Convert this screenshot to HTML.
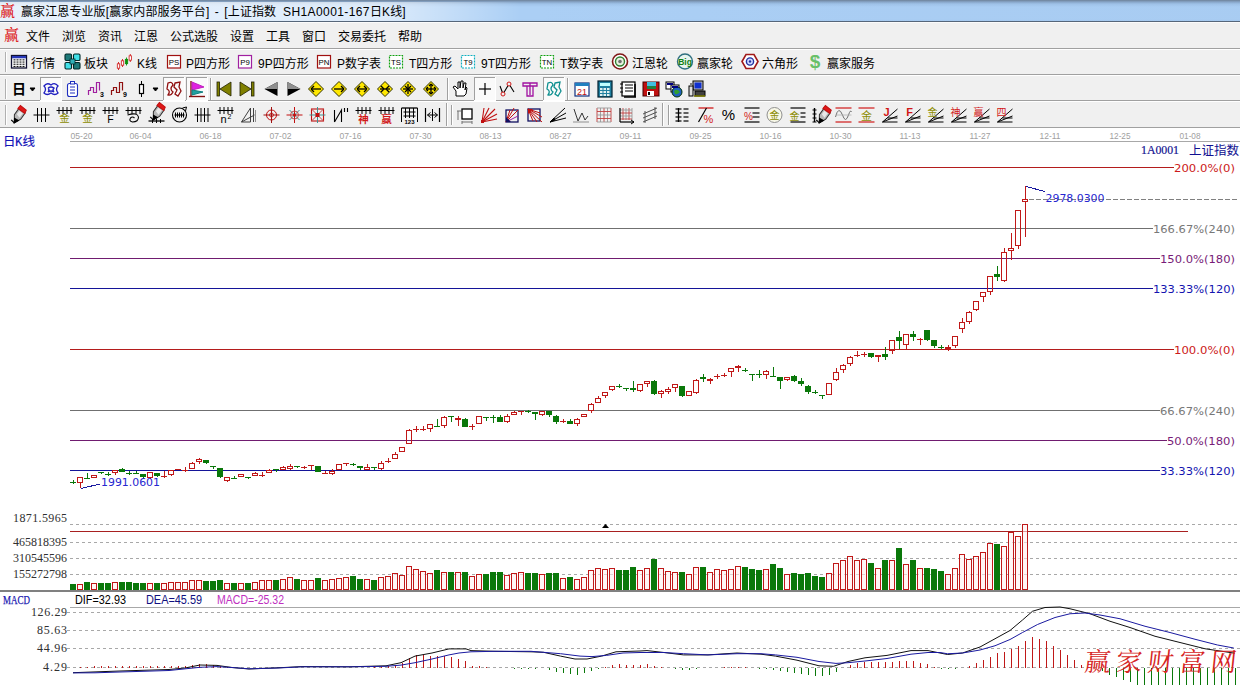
<!DOCTYPE html><html lang="zh-CN"><head><meta charset="utf-8"><title>赢家江恩专业版</title><style>
html,body{margin:0;padding:0;background:#fff}
body{width:1240px;height:685px;position:relative;overflow:hidden;font-family:"Liberation Sans","Noto Sans CJK SC",sans-serif;font-size:12px;color:#000}
.abs{position:absolute}
#title{left:0;top:0;width:1240px;height:21px;background:linear-gradient(180deg,#6e8299 0,#88a6c9 2px,#a0c3e9 4px,#abcff5 7px,#abcff5 19px,#a6caf0 21px)}
#title:after{content:"";position:absolute;left:0;right:0;top:21px;height:1px;background:#56667a}
#glow{left:0;top:2px;width:520px;height:19px;background:linear-gradient(90deg,rgba(255,255,255,.72) 0,rgba(255,255,255,.6) 380px,rgba(255,255,255,0) 520px)}
#shade{left:520px;top:2px;width:720px;height:19px;background:linear-gradient(90deg,rgba(120,150,190,0) 0,rgba(120,150,190,.03) 300px,rgba(120,150,190,.05) 720px)}
#ttext{left:21px;top:3px;height:18px;line-height:18px;white-space:nowrap;font-size:12px;letter-spacing:.1px}
.logo{color:#dc1010;font-family:"Noto Serif CJK SC",serif;font-weight:500}
#bars{left:0;top:22px;width:1240px;height:106px;background:#f0f0f0}
.hl{left:0;width:1240px;height:1px}
.mi{top:28px;height:18px;line-height:18px;white-space:nowrap}
.ti{top:55px;height:18px;line-height:18px;white-space:nowrap}
</style></head><body>
<div id="title" class="abs"></div><div id="glow" class="abs"></div><div id="shade" class="abs"></div>
<div class="abs logo" style="left:0;top:1px;font-size:15px;line-height:18px">赢</div>
<div id="ttext" class="abs">赢家江恩专业版[赢家内部服务平台]<span style="margin:0 2px"> - </span>[上证指数&nbsp; <span style="letter-spacing:.4px">SH1A0001-167</span>日K线]</div>
<div id="bars" class="abs"></div>
<div class="abs hl" style="top:22px;background:#fbfbfb"></div>
<div class="abs hl" style="top:48px;background:#a0a0a0"></div>
<div class="abs hl" style="top:49px;background:#fff"></div>
<div class="abs hl" style="top:74px;background:#a0a0a0"></div>
<div class="abs hl" style="top:75px;background:#fff"></div>
<div class="abs hl" style="top:100px;background:#a0a0a0"></div>
<div class="abs hl" style="top:101px;background:#fff"></div>
<div class="abs hl" style="top:127px;background:#a0a0a0"></div>
<div class="abs logo" style="left:4px;top:25px;font-size:15px;line-height:18px">赢</div>
<div class="abs mi" style="left:26px">文件</div>
<div class="abs mi" style="left:62px">浏览</div>
<div class="abs mi" style="left:98px">资讯</div>
<div class="abs mi" style="left:134px">江恩</div>
<div class="abs mi" style="left:170px">公式选股</div>
<div class="abs mi" style="left:230px">设置</div>
<div class="abs mi" style="left:266px">工具</div>
<div class="abs mi" style="left:302px">窗口</div>
<div class="abs mi" style="left:338px">交易委托</div>
<div class="abs mi" style="left:398px">帮助</div>
<div class="abs ti" style="left:31px">行情</div>
<div class="abs ti" style="left:84px">板块</div>
<div class="abs ti" style="left:137px">K线</div>
<div class="abs ti" style="left:186px">P四方形</div>
<div class="abs ti" style="left:258px">9P四方形</div>
<div class="abs ti" style="left:337px">P数字表</div>
<div class="abs ti" style="left:409px">T四方形</div>
<div class="abs ti" style="left:481px">9T四方形</div>
<div class="abs ti" style="left:560px">T数字表</div>
<div class="abs ti" style="left:632px">江恩轮</div>
<div class="abs ti" style="left:697px">赢家轮</div>
<div class="abs ti" style="left:762px">六角形</div>
<div class="abs ti" style="left:827px">赢家服务</div>
<svg class="abs" style="left:0;top:0" width="1240" height="129" viewBox="0 0 1240 129">
<line x1="5.5" y1="52" x2="5.5" y2="72" stroke="#b0b0b0" stroke-width="1"/><line x1="6.5" y1="52" x2="6.5" y2="72" stroke="#fff" stroke-width="1"/>
<line x1="5.5" y1="79" x2="5.5" y2="99" stroke="#b0b0b0" stroke-width="1"/><line x1="6.5" y1="79" x2="6.5" y2="99" stroke="#fff" stroke-width="1"/>
<line x1="5.5" y1="105" x2="5.5" y2="125" stroke="#b0b0b0" stroke-width="1"/><line x1="6.5" y1="105" x2="6.5" y2="125" stroke="#fff" stroke-width="1"/>
<g transform="translate(19,61.5)"><rect x="-7.5" y="-6" width="15" height="12.5" fill="#fff" stroke="#101030" stroke-width="1.3" /><rect x="-7" y="-5.5" width="14" height="2.3" fill="#2838b8" stroke="none" stroke-width="1" /><rect x="-5.5" y="-2.2" width="2" height="1.1" fill="#181818" stroke="none" stroke-width="1" /><rect x="-2.5" y="-2.2" width="2" height="1.1" fill="#181818" stroke="none" stroke-width="1" /><rect x="0.5" y="-2.2" width="2" height="1.1" fill="#181818" stroke="none" stroke-width="1" /><rect x="3.5" y="-2.2" width="2" height="1.1" fill="#181818" stroke="none" stroke-width="1" /><rect x="-5.5" y="0" width="2" height="1.1" fill="#181818" stroke="none" stroke-width="1" /><rect x="-2.5" y="0" width="2" height="1.1" fill="#181818" stroke="none" stroke-width="1" /><rect x="0.5" y="0" width="2" height="1.1" fill="#181818" stroke="none" stroke-width="1" /><rect x="3.5" y="0" width="2" height="1.1" fill="#181818" stroke="none" stroke-width="1" /><rect x="-5.5" y="2.2" width="2" height="1.1" fill="#181818" stroke="none" stroke-width="1" /><rect x="-2.5" y="2.2" width="2" height="1.1" fill="#181818" stroke="none" stroke-width="1" /><rect x="0.5" y="2.2" width="2" height="1.1" fill="#181818" stroke="none" stroke-width="1" /><rect x="3.5" y="2.2" width="2" height="1.1" fill="#181818" stroke="none" stroke-width="1" /><rect x="-5.5" y="4.4" width="2" height="1.1" fill="#181818" stroke="none" stroke-width="1" /><rect x="-2.5" y="4.4" width="2" height="1.1" fill="#181818" stroke="none" stroke-width="1" /><rect x="0.5" y="4.4" width="2" height="1.1" fill="#181818" stroke="none" stroke-width="1" /><rect x="3.5" y="4.4" width="2" height="1.1" fill="#181818" stroke="none" stroke-width="1" /></g><g transform="translate(72.5,61.5)"><rect x="-7.5" y="-7.5" width="6.5" height="6.5" fill="#1c7878" stroke="#002828" stroke-width="1.1" rx="1.2"/><rect x="1.0" y="-7.5" width="6.5" height="6.5" fill="#40e0e8" stroke="#002828" stroke-width="1.1" rx="1.2"/><rect x="-7.5" y="1.0" width="6.5" height="6.5" fill="#40e0e8" stroke="#002828" stroke-width="1.1" rx="1.2"/><rect x="1.0" y="1.0" width="6.5" height="6.5" fill="#1c7878" stroke="#002828" stroke-width="1.1" rx="1.2"/><rect x="-2.5" y="-2.5" width="5" height="5" fill="#30b0b8" stroke="#002828" stroke-width="0.8" /></g><g transform="translate(124.5,61.5)"><line x1="-6" y1="0.5" x2="-6" y2="8.5" stroke="#d01818" stroke-width="0.9"/><rect x="-7.2" y="2.3" width="2.4" height="4.4" fill="#fff" stroke="#d01818" stroke-width="0.8" /><line x1="-2" y1="-2.5" x2="-2" y2="5.5" stroke="#d01818" stroke-width="0.9"/><rect x="-3.2" y="-0.7000000000000002" width="2.4" height="4.4" fill="#fff" stroke="#d01818" stroke-width="0.8" /><line x1="2" y1="-4" x2="2" y2="4" stroke="#0a900a" stroke-width="0.9"/><rect x="0.8" y="-2.2" width="2.4" height="4.4" fill="#0a900a" stroke="#0a900a" stroke-width="0.8" /><line x1="5.8" y1="-7.5" x2="5.8" y2="0.5" stroke="#d01818" stroke-width="0.9"/><rect x="4.6" y="-5.7" width="2.4" height="4.4" fill="#fff" stroke="#d01818" stroke-width="0.8" /></g><g transform="translate(174,61.5)"><rect x="-6.5" y="-6" width="13" height="12.5" fill="#fff" stroke="#a01010" stroke-width="1.2" /><text x="0" y="3.3" fill="#000" font-size="7.8px" font-family="'Liberation Sans','Noto Sans CJK SC',sans-serif" font-weight="normal" text-anchor="middle">PS</text></g><g transform="translate(245,61.5)"><rect x="-6.5" y="-6" width="13" height="12.5" fill="#fff" stroke="#a020a0" stroke-width="1.2" /><text x="0" y="3.3" fill="#000" font-size="7.8px" font-family="'Liberation Sans','Noto Sans CJK SC',sans-serif" font-weight="normal" text-anchor="middle">P9</text></g><g transform="translate(324,61.5)"><rect x="-6.5" y="-6" width="13" height="12.5" fill="#fff" stroke="#a01010" stroke-width="1.2" /><text x="0" y="3.3" fill="#000" font-size="7.8px" font-family="'Liberation Sans','Noto Sans CJK SC',sans-serif" font-weight="normal" text-anchor="middle">PN</text></g><g transform="translate(396,61.5)"><rect x="-6.5" y="-6" width="13" height="12.5" fill="#fff" stroke="#10a010" stroke-width="1.2" stroke-dasharray="2,1"/><text x="0" y="3.3" fill="#000" font-size="7.8px" font-family="'Liberation Sans','Noto Sans CJK SC',sans-serif" font-weight="normal" text-anchor="middle">TS</text></g><g transform="translate(468,61.5)"><rect x="-6.5" y="-6" width="13" height="12.5" fill="#fff" stroke="#10b0c0" stroke-width="1.2" stroke-dasharray="2,1"/><text x="0" y="3.3" fill="#000" font-size="7.8px" font-family="'Liberation Sans','Noto Sans CJK SC',sans-serif" font-weight="normal" text-anchor="middle">T9</text></g><g transform="translate(547,61.5)"><rect x="-6.5" y="-6" width="13" height="12.5" fill="#fff" stroke="#10a010" stroke-width="1.2" stroke-dasharray="2,1"/><text x="0" y="3.3" fill="#000" font-size="7.8px" font-family="'Liberation Sans','Noto Sans CJK SC',sans-serif" font-weight="normal" text-anchor="middle">TN</text></g><g transform="translate(620,61.5)"><circle r="7.5" fill="#fff" stroke="#801818" stroke-width="1.6"/><circle r="4.5" fill="#e8f0e0" stroke="#308030" stroke-width="1.4"/><circle r="1.8" fill="#707070"/></g><g transform="translate(685,61.5)"><circle r="7.5" fill="#e8f4f0" stroke="#307080" stroke-width="1.4"/><text x="0" y="3.5" fill="#108010" font-size="8.5px" font-family="'Liberation Sans','Noto Sans CJK SC',sans-serif" font-weight="bold" text-anchor="middle">Big</text></g><g transform="translate(750,61.5)"><path d="M-8 0 L-4 -7 L4 -7 L8 0 L4 7 L-4 7 Z" stroke="#a01818" stroke-width="1.6" fill="#fff"/><circle r="3.6" fill="#d0d8ff" stroke="#2030a0" stroke-width="1.4"/><circle r="1.2" fill="#2030a0"/></g><g transform="translate(815,61.5)"><text x="0" y="6.5" fill="#68c068" font-size="19px" font-family="'Liberation Sans','Noto Sans CJK SC',sans-serif" font-weight="bold" text-anchor="middle">$</text></g>
<text x="19" y="94" fill="#000" font-size="14px" font-family="'Liberation Sans','Noto Sans CJK SC',sans-serif" font-weight="bold" text-anchor="middle">日</text><path d="M30 88 L35 88 L32.5 91 Z" stroke="#000" stroke-width="1" fill="#000"/><rect x="40" y="77" width="22" height="24" fill="#fafafa" stroke="none" stroke-width="1" /><line x1="40" y1="77.5" x2="62" y2="77.5" stroke="#a0a0a0" stroke-width="1"/><line x1="40.5" y1="77" x2="40.5" y2="101" stroke="#a0a0a0" stroke-width="1"/><line x1="40" y1="100.5" x2="62" y2="100.5" stroke="#fff" stroke-width="1"/><line x1="61.5" y1="77" x2="61.5" y2="101" stroke="#fff" stroke-width="1"/><g transform="translate(51,89)"><path d="M-7 -3 Q-4 -7 0 -4 Q4 -7 7 -3 Q4 0 7 4 Q4 7 0 4 Q-4 7 -7 4 Q-4 0 -7 -3 Z M-3 -1 Q0 -3 3 -1 Q1 1 3 3 Q0 1 -3 3 Q-1 1 -3 -1" stroke="#2020c0" stroke-width="1.3" fill="none"/></g><g transform="translate(72.5,89.5)"><rect x="-5" y="-6" width="10" height="13" fill="#fff" stroke="#2030c0" stroke-width="1.1" rx="2"/><rect x="-2" y="-8" width="4" height="2.5" fill="#fff" stroke="#2030c0" stroke-width="1" /><path d="M-2.5 -2.5 h5 M-2.5 0.5 h5 M-2.5 3.5 h5" stroke="#2030c0" stroke-width="1.1" fill="none"/></g><g transform="translate(96,89)"><path d="M-7.5 6 V1.5 H-5.5 V-1.5 H-2.5 V3.5 H0.5 V-6.5 H3.5 V1.5" stroke="#a020a0" stroke-width="1.2" fill="none"/><text x="6" y="8" fill="#000" font-size="7px" font-family="'Liberation Sans','Noto Sans CJK SC',sans-serif" font-weight="bold" text-anchor="middle">3</text></g><g transform="translate(119,89)"><path d="M-7.5 6 V1.5 H-5.5 V-1.5 H-2.5 V3.5 H0.5 V-6.5 H3.5 V1.5" stroke="#901010" stroke-width="1.2" fill="none"/><text x="6" y="8" fill="#000" font-size="7px" font-family="'Liberation Sans','Noto Sans CJK SC',sans-serif" font-weight="bold" text-anchor="middle">9</text></g><g transform="translate(141.5,89)"><line x1="0" y1="-8" x2="0" y2="8" stroke="#000" stroke-width="1"/><rect x="-2" y="-4.5" width="4" height="9" fill="#fff" stroke="#000" stroke-width="1.2" /></g><path d="M153 88 L158 88 L155.5 91 Z" stroke="#000" stroke-width="1" fill="#000"/><rect x="163" y="77" width="22" height="24" fill="#fafafa" stroke="none" stroke-width="1" /><line x1="163" y1="77.5" x2="185" y2="77.5" stroke="#a0a0a0" stroke-width="1"/><line x1="163.5" y1="77" x2="163.5" y2="101" stroke="#a0a0a0" stroke-width="1"/><line x1="163" y1="100.5" x2="185" y2="100.5" stroke="#fff" stroke-width="1"/><line x1="184.5" y1="77" x2="184.5" y2="101" stroke="#fff" stroke-width="1"/><g transform="translate(174,89)"><path d="M-6 -6 Q-2 -8 -1 -4 Q-5 0 -1 3 Q-3 7 -6 6 Q-3 2 -7 0 Z M1 -6 L6 -7 L5 -2 L7 2 L4 7 L1 5 L3 1 L0 -2 Z" stroke="#901010" stroke-width="1.3" fill="none"/></g><rect x="186" y="77" width="22" height="24" fill="#fafafa" stroke="none" stroke-width="1" /><line x1="186" y1="77.5" x2="208" y2="77.5" stroke="#a0a0a0" stroke-width="1"/><line x1="186.5" y1="77" x2="186.5" y2="101" stroke="#a0a0a0" stroke-width="1"/><line x1="186" y1="100.5" x2="208" y2="100.5" stroke="#fff" stroke-width="1"/><line x1="207.5" y1="77" x2="207.5" y2="101" stroke="#fff" stroke-width="1"/><g transform="translate(197,89)"><line x1="-6" y1="-8" x2="-6" y2="8" stroke="#801010" stroke-width="1.4"/><line x1="-8" y1="7.5" x2="8" y2="7.5" stroke="#801010" stroke-width="1.4"/><path d="M-5 -7 L7 -2 L-5 1 Z" stroke="#c020c0" stroke-width="1" fill="#e020e0"/><path d="M-5 1 L6 3 L-5 6 Z" stroke="#108080" stroke-width="1" fill="#20a0a0"/></g><line x1="210.5" y1="78" x2="210.5" y2="100" stroke="#a0a0a0" stroke-width="1"/><line x1="211.5" y1="78" x2="211.5" y2="100" stroke="#fff" stroke-width="1"/><g transform="translate(224,89)"><rect x="-7" y="-7" width="2.5" height="14" fill="#808000" stroke="#202000" stroke-width="0.8" /><path d="M7 -7 L-4 0 L7 7 Z" stroke="#202000" stroke-width="0.8" fill="#808000"/></g><g transform="translate(247,89)"><rect x="4.5" y="-7" width="2.5" height="14" fill="#808000" stroke="#202000" stroke-width="0.8" /><path d="M-7 -7 L4 0 L-7 7 Z" stroke="#202000" stroke-width="0.8" fill="#808000"/></g><g transform="translate(271,89)"><path d="M6.5 -7 L-6.5 0 L6.5 7 Z" stroke="none" stroke-width="0" fill="#000"/><path d="M6.5 -7 L-6.5 0 L6.5 0 Z" stroke="none" stroke-width="0" fill="#909090"/></g><g transform="translate(294,89)"><path d="M-6.5 -7 L6.5 0 L-6.5 7 Z" stroke="none" stroke-width="0" fill="#000"/><path d="M-6.5 -7 L6.5 0 L-6.5 0 Z" stroke="none" stroke-width="0" fill="#909090"/></g><g transform="translate(316,89)"><path d="M-7.5 0 L0 -7.5 L7.5 0 L0 7.5 Z" stroke="#303000" stroke-width="1" fill="#ffe800"/><g stroke-width="1.3"><line x1="-5" y1="0" x2="5" y2="0" stroke="#000" /><path d="M-5 0 L-2 -3 M-5 0 L-2 3" stroke="#000"  fill="none"/></g></g><g transform="translate(339,89)"><path d="M-7.5 0 L0 -7.5 L7.5 0 L0 7.5 Z" stroke="#303000" stroke-width="1" fill="#ffe800"/><g stroke-width="1.3"><line x1="-5" y1="0" x2="5" y2="0" stroke="#000" /><path d="M5 0 L2 -3 M5 0 L2 3" stroke="#000"  fill="none"/></g></g><g transform="translate(362,89)"><path d="M-7.5 0 L0 -7.5 L7.5 0 L0 7.5 Z" stroke="#303000" stroke-width="1" fill="#ffe800"/><g stroke-width="1.3"><line x1="-5" y1="0" x2="5" y2="0" stroke="#000" /><path d="M-5 0 L-2 -3 M-5 0 L-2 3 M5 0 L2 -3 M5 0 L2 3" stroke="#000"  fill="none"/></g></g><g transform="translate(385,89)"><path d="M-7.5 0 L0 -7.5 L7.5 0 L0 7.5 Z" stroke="#303000" stroke-width="1" fill="#ffe800"/><g stroke-width="1.3"><line x1="-5" y1="0" x2="5" y2="0" stroke="#000" /><path d="M-1 0 L-4 -3 M-1 0 L-4 3 M1 0 L4 -3 M1 0 L4 3" stroke="#000"  fill="none"/></g></g><g transform="translate(408,89)"><path d="M-7.5 0 L0 -7.5 L7.5 0 L0 7.5 Z" stroke="#303000" stroke-width="1" fill="#ffe800"/><g stroke-width="1.3"><line x1="-5" y1="0" x2="5" y2="0" stroke="#000" /><line x1="0" y1="-5" x2="0" y2="5" stroke="#000" /><line x1="-3" y1="-3" x2="3" y2="3" stroke="#000" /><line x1="-3" y1="3" x2="3" y2="-3" stroke="#000" /></g></g><g transform="translate(431,89)"><path d="M-7.5 0 L0 -7.5 L7.5 0 L0 7.5 Z" stroke="#303000" stroke-width="1" fill="#ffe800"/><g stroke-width="1.3"><line x1="-5" y1="0" x2="5" y2="0" stroke="#000" /><line x1="0" y1="-5" x2="0" y2="5" stroke="#000" /><path d="M-5 0 L-3 -2 M-5 0 L-3 2 M5 0 L3 -2 M5 0 L3 2 M0 -5 L-2 -3 M0 -5 L2 -3 M0 5 L-2 3 M0 5 L2 3" stroke="#000"  fill="none"/></g></g><line x1="447.5" y1="78" x2="447.5" y2="100" stroke="#a0a0a0" stroke-width="1"/><line x1="448.5" y1="78" x2="448.5" y2="100" stroke="#fff" stroke-width="1"/><g transform="translate(460,89)"><path d="M-4 7 L-4 2 L-7 -2 L-5 -3 L-2 0 L-2 -7 L0 -7 L0 -1 L1 -8 L3 -8 L3 -1 L4 -6 L6 -6 L5 1 L6 -2 L7 -1 L6 5 L4 7 Z" stroke="#000" stroke-width="1" fill="#fff"/></g><rect x="474" y="77" width="22" height="24" fill="#fafafa" stroke="none" stroke-width="1" /><line x1="474" y1="77.5" x2="496" y2="77.5" stroke="#a0a0a0" stroke-width="1"/><line x1="474.5" y1="77" x2="474.5" y2="101" stroke="#a0a0a0" stroke-width="1"/><line x1="474" y1="100.5" x2="496" y2="100.5" stroke="#fff" stroke-width="1"/><line x1="495.5" y1="77" x2="495.5" y2="101" stroke="#fff" stroke-width="1"/><g transform="translate(485,89)"><line x1="-6" y1="0" x2="6" y2="0" stroke="#000" stroke-width="1.2"/><line x1="0" y1="-6" x2="0" y2="6" stroke="#000" stroke-width="1.2"/></g><g transform="translate(507,89)"><path d="M-7 -3 L-4 5 L2 -5 L7 3" stroke="#000" stroke-width="1.1" fill="none"/><circle cx="-4" cy="5" r="2" fill="#f0f0f0" stroke="#d01818"/><circle cx="2" cy="-5" r="2" fill="#f0f0f0" stroke="#d01818"/></g><g transform="translate(530,89)"><path d="M-7 -6 h14 v3 h-4 v10 h-6 v-10 h-4 z M-3 -3 h6 M0 -6 v12" stroke="#a010a0" stroke-width="1.3" fill="none"/></g><rect x="543" y="77" width="22" height="24" fill="#fafafa" stroke="none" stroke-width="1" /><line x1="543" y1="77.5" x2="565" y2="77.5" stroke="#a0a0a0" stroke-width="1"/><line x1="543.5" y1="77" x2="543.5" y2="101" stroke="#a0a0a0" stroke-width="1"/><line x1="543" y1="100.5" x2="565" y2="100.5" stroke="#fff" stroke-width="1"/><line x1="564.5" y1="77" x2="564.5" y2="101" stroke="#fff" stroke-width="1"/><g transform="translate(554,89)"><path d="M-6 -6 Q-2 -8 -1 -4 Q-5 0 -1 3 Q-3 7 -6 6 Q-3 2 -7 0 Z M1 -6 L6 -7 L5 -2 L7 2 L4 7 L1 5 L3 1 L0 -2 Z" stroke="#109090" stroke-width="1.3" fill="none"/></g><line x1="567.5" y1="78" x2="567.5" y2="100" stroke="#a0a0a0" stroke-width="1"/><line x1="568.5" y1="78" x2="568.5" y2="100" stroke="#fff" stroke-width="1"/><g transform="translate(582,89)"><rect x="-7" y="-6" width="14" height="13" fill="#fff" stroke="#103080" stroke-width="1.2" /><rect x="-7" y="-6" width="14" height="3" fill="#2080c0" stroke="none" stroke-width="1" /><text x="0" y="6" fill="#c01010" font-size="9px" font-family="'Liberation Sans','Noto Sans CJK SC',sans-serif" font-weight="normal" text-anchor="middle">21</text></g><g transform="translate(605,89)"><rect x="-7" y="-8" width="14" height="16" fill="#2080a0" stroke="#002030" stroke-width="1.2" /><rect x="-5" y="-6" width="10" height="3" fill="#c0ffff" stroke="none" stroke-width="1" /><rect x="-5" y="-1" width="2.5" height="2" fill="#e0f0f0" stroke="none" stroke-width="1" /><rect x="-1.5" y="-1" width="2.5" height="2" fill="#e0f0f0" stroke="none" stroke-width="1" /><rect x="2" y="-1" width="2.5" height="2" fill="#e0f0f0" stroke="none" stroke-width="1" /><rect x="-5" y="2" width="2.5" height="2" fill="#e0f0f0" stroke="none" stroke-width="1" /><rect x="-1.5" y="2" width="2.5" height="2" fill="#e0f0f0" stroke="none" stroke-width="1" /><rect x="2" y="2" width="2.5" height="2" fill="#e0f0f0" stroke="none" stroke-width="1" /><rect x="-5" y="5" width="2.5" height="2" fill="#e0f0f0" stroke="none" stroke-width="1" /><rect x="-1.5" y="5" width="2.5" height="2" fill="#e0f0f0" stroke="none" stroke-width="1" /><rect x="2" y="5" width="2.5" height="2" fill="#e0f0f0" stroke="none" stroke-width="1" /></g><g transform="translate(628,89)"><rect x="-6" y="-7" width="13" height="14" fill="#fff" stroke="#000" stroke-width="1.2" /><line x1="-3" y1="-4" x2="5" y2="-4" stroke="#000" stroke-width="1"/><line x1="-3" y1="-1" x2="5" y2="-1" stroke="#000" stroke-width="1"/><line x1="-3" y1="2" x2="5" y2="2" stroke="#000" stroke-width="1"/><line x1="-8" y1="-5" x2="-5" y2="-5" stroke="#000" stroke-width="1"/><line x1="-8" y1="-1" x2="-5" y2="-1" stroke="#000" stroke-width="1"/><line x1="-8" y1="3" x2="-5" y2="3" stroke="#000" stroke-width="1"/><line x1="7" y1="-5" x2="7" y2="8" stroke="#000" stroke-width="1.5"/><line x1="-4" y1="8" x2="8" y2="8" stroke="#000" stroke-width="1.5"/></g><g transform="translate(651,89)"><rect x="-8" y="-7" width="16" height="14" fill="#c01010" stroke="#400000" stroke-width="1" /><rect x="-4" y="-7" width="9" height="7" fill="#40c0e0" stroke="none" stroke-width="1" /><rect x="-4" y="-3" width="9" height="3" fill="#208040" stroke="none" stroke-width="1" /><rect x="-4" y="2" width="7" height="5" fill="#fff" stroke="none" stroke-width="1" /><rect x="-3" y="3" width="2" height="3" fill="#000" stroke="none" stroke-width="1" /></g><g transform="translate(674,89)"><rect x="-8" y="-7" width="8" height="7" fill="#fff" stroke="#000" stroke-width="1" /><rect x="-3" y="-4" width="8" height="7" fill="#fff" stroke="#000" stroke-width="1" /><circle cx="3" cy="3" r="5" fill="#2060c0" stroke="#003000"/><path d="M0 2 Q3 -1 6 3 Q3 6 1 5 Z" stroke="none" stroke-width="0" fill="#30a030"/><rect x="-7" y="-6" width="6" height="2" fill="#000080" stroke="none" stroke-width="1" /><rect x="-2" y="-3" width="6" height="2" fill="#000080" stroke="none" stroke-width="1" /></g><g transform="translate(697,89)"><rect x="-4" y="-8" width="10" height="9" fill="#c0c0c0" stroke="#000" stroke-width="1" /><rect x="-2.5" y="-6.5" width="7" height="6" fill="#1030d0" stroke="none" stroke-width="1" /><rect x="-2" y="2" width="10" height="5" fill="#404040" stroke="#000" stroke-width="1" /><rect x="-8" y="-3" width="4" height="10" fill="#e0e0e0" stroke="#000" stroke-width="1" /><rect x="-7" y="-6" width="2" height="3" fill="#808080" stroke="none" stroke-width="1" /><line x1="-3" y1="7" x2="8" y2="7" stroke="#808000" stroke-width="1.5"/></g>
<g transform="translate(18.5,115)"><g transform="rotate(-10) translate(0.5,0)"><path d="M-6 7 L-4.5 -1 L1 -6.5 L6.5 -1 L1 4.5 Z" stroke="#303030" stroke-width="1" fill="#b8b8b8"/><path d="M-2 -1 L1 -4 L4 -1 L0 3 Z" stroke="none" stroke-width="0" fill="#e8e8e8"/><path d="M0 -6.5 L3 -9 L8 -3.5 L6 -0.5 Z" stroke="#c01010" stroke-width="1" fill="#e01818"/><path d="M-6 7 L-5 2.5 L-1.5 5.5 Z" stroke="#000" stroke-width="1" fill="#000"/><line x1="-8.5" y1="3.5" x2="-6" y2="7" stroke="#000" stroke-width="1.2"/></g></g><g transform="translate(41.5,115)"><line x1="-8" y1="0" x2="8" y2="0" stroke="#000" stroke-width="1"/><line x1="-4" y1="-7" x2="-4" y2="7" stroke="#000" stroke-width="1"/><line x1="0" y1="-7" x2="0" y2="7" stroke="#000" stroke-width="1"/><line x1="4" y1="-7" x2="4" y2="7" stroke="#000" stroke-width="1"/></g><g transform="translate(64.5,115)"><line x1="-8" y1="-4.5" x2="8" y2="-4.5" stroke="#000" stroke-width="1"/><line x1="-5.5" y1="-8" x2="-5.5" y2="-1" stroke="#000" stroke-width="1"/><line x1="-1.5" y1="-8" x2="-1.5" y2="-1" stroke="#000" stroke-width="1"/><line x1="2.5" y1="-8" x2="2.5" y2="-1" stroke="#000" stroke-width="1"/><line x1="6.5" y1="-8" x2="6.5" y2="-1" stroke="#000" stroke-width="1"/><text x="0" y="7" fill="#8c8c00" font-size="10.5px" font-family="'Liberation Sans','Noto Sans CJK SC',sans-serif" font-weight="normal" text-anchor="middle">金</text></g><g transform="translate(87.5,115)"><line x1="-8" y1="-4.5" x2="8" y2="-4.5" stroke="#000" stroke-width="1"/><line x1="-5.5" y1="-8" x2="-5.5" y2="-1" stroke="#000" stroke-width="1"/><line x1="-1.5" y1="-8" x2="-1.5" y2="-1" stroke="#000" stroke-width="1"/><line x1="2.5" y1="-8" x2="2.5" y2="-1" stroke="#000" stroke-width="1"/><line x1="6.5" y1="-8" x2="6.5" y2="-1" stroke="#000" stroke-width="1"/><text x="0" y="7" fill="#8c8c00" font-size="10.5px" font-family="'Liberation Sans','Noto Sans CJK SC',sans-serif" font-weight="normal" text-anchor="middle">金</text></g><g transform="translate(110.5,115)"><line x1="-8" y1="-4.5" x2="8" y2="-4.5" stroke="#000" stroke-width="1"/><line x1="-5.5" y1="-8" x2="-5.5" y2="-1" stroke="#000" stroke-width="1"/><line x1="-1.5" y1="-8" x2="-1.5" y2="-1" stroke="#000" stroke-width="1"/><line x1="2.5" y1="-8" x2="2.5" y2="-1" stroke="#000" stroke-width="1"/><line x1="6.5" y1="-8" x2="6.5" y2="-1" stroke="#000" stroke-width="1"/><text x="0" y="7.5" fill="#000" font-size="10.5px" font-family="'Liberation Sans','Noto Sans CJK SC',sans-serif" font-weight="normal" text-anchor="middle">F</text></g><g transform="translate(133.5,115)"><line x1="-8" y1="-4.5" x2="8" y2="-4.5" stroke="#000" stroke-width="1"/><line x1="-5.5" y1="-8" x2="-5.5" y2="-1" stroke="#000" stroke-width="1"/><line x1="-1.5" y1="-8" x2="-1.5" y2="-1" stroke="#000" stroke-width="1"/><line x1="2.5" y1="-8" x2="2.5" y2="-1" stroke="#000" stroke-width="1"/><line x1="6.5" y1="-8" x2="6.5" y2="-1" stroke="#000" stroke-width="1"/><path d="M-6 0 Q4 -3 5 2 Q5 7 -1 7 Q-5 6 -3 3 Q-1 1 1 3" stroke="#000" stroke-width="1.1" fill="none"/></g><g transform="translate(156.5,115)"><g transform="translate(1,-3)"><g transform="rotate(-10) translate(0.5,0)"><path d="M-6 7 L-4.5 -1 L1 -6.5 L6.5 -1 L1 4.5 Z" stroke="#303030" stroke-width="1" fill="#b8b8b8"/><path d="M-2 -1 L1 -4 L4 -1 L0 3 Z" stroke="none" stroke-width="0" fill="#e8e8e8"/><path d="M0 -6.5 L3 -9 L8 -3.5 L6 -0.5 Z" stroke="#c01010" stroke-width="1" fill="#e01818"/><path d="M-6 7 L-5 2.5 L-1.5 5.5 Z" stroke="#000" stroke-width="1" fill="#000"/><line x1="-8.5" y1="3.5" x2="-6" y2="7" stroke="#000" stroke-width="1.2"/></g></g><line x1="-8" y1="6" x2="8" y2="6" stroke="#000" stroke-width="1.3"/><line x1="-4" y1="4" x2="-4" y2="8" stroke="#000" stroke-width="1"/><line x1="0" y1="4" x2="0" y2="8" stroke="#000" stroke-width="1"/><line x1="4" y1="4" x2="4" y2="8" stroke="#000" stroke-width="1"/></g><g transform="translate(179.5,115)"><circle r="7" fill="none" stroke="#000" stroke-width="1.1"/><line x1="-5" y1="0" x2="5" y2="0" stroke="#000" stroke-width="1.2"/><line x1="-4" y1="-2.5" x2="-4" y2="2.5" stroke="#000" stroke-width="1"/><line x1="-2" y1="-2.5" x2="-2" y2="2.5" stroke="#000" stroke-width="1"/><line x1="0" y1="-2.5" x2="0" y2="2.5" stroke="#000" stroke-width="1"/><line x1="2" y1="-2.5" x2="2" y2="2.5" stroke="#000" stroke-width="1"/><line x1="4" y1="-2.5" x2="4" y2="2.5" stroke="#000" stroke-width="1"/><path d="M3 -7 L7 -8 L6 -4" stroke="#000" stroke-width="1" fill="none"/></g><g transform="translate(202.5,115)"><line x1="-8" y1="0" x2="8" y2="0" stroke="#000" stroke-width="1"/><line x1="-5" y1="-7" x2="-5" y2="7" stroke="#000" stroke-width="1"/><line x1="-1.5" y1="-7" x2="-1.5" y2="7" stroke="#000" stroke-width="1"/><line x1="2" y1="-7" x2="2" y2="7" stroke="#000" stroke-width="1"/><line x1="5.5" y1="-7" x2="5.5" y2="7" stroke="#000" stroke-width="1"/></g><g transform="translate(225.5,115)"><line x1="-8" y1="-4.5" x2="8" y2="-4.5" stroke="#000" stroke-width="1"/><line x1="-5.5" y1="-8" x2="-5.5" y2="-1" stroke="#000" stroke-width="1"/><line x1="-1.5" y1="-8" x2="-1.5" y2="-1" stroke="#000" stroke-width="1"/><line x1="2.5" y1="-8" x2="2.5" y2="-1" stroke="#000" stroke-width="1"/><line x1="6.5" y1="-8" x2="6.5" y2="-1" stroke="#000" stroke-width="1"/><text x="-2" y="8" fill="#000" font-size="11px" font-family="'Liberation Sans','Noto Sans CJK SC',sans-serif" font-weight="normal" text-anchor="middle">n</text><text x="4" y="4" fill="#000" font-size="7px" font-family="'Liberation Sans','Noto Sans CJK SC',sans-serif" font-weight="normal" text-anchor="middle">2</text></g><g transform="translate(248.5,115)"><path d="M-7 7 L2 -7 L2 7 Z M-7 7 L6 0 M5 -7 L5 7" stroke="#404040" stroke-width="1" fill="none"/><line x1="7" y1="-5" x2="7" y2="7" stroke="#909090" stroke-width="1"/></g><g transform="translate(271.5,115)"><circle r="5" fill="none" stroke="#c01010" stroke-width="1"/><line x1="-8" y1="0" x2="8" y2="0" stroke="#a01010" stroke-width="1"/><line x1="0" y1="-8" x2="0" y2="8" stroke="#a01010" stroke-width="1"/><circle r="2" fill="none" stroke="#c01010" stroke-width=".8"/></g><g transform="translate(294.5,115)"><line x1="-8" y1="0" x2="8" y2="0" stroke="#c01010" stroke-width="1"/><line x1="0" y1="-8" x2="0" y2="8" stroke="#c01010" stroke-width="1"/><line x1="-5" y1="-5" x2="5" y2="5" stroke="#409090" stroke-width="1"/><line x1="-5" y1="5" x2="5" y2="-5" stroke="#409090" stroke-width="1"/><circle r="4" fill="none" stroke="#c05050"/><circle r="1.5" fill="#c01010"/></g><g transform="translate(317.5,115)"><rect x="-6" y="-6" width="12" height="12" fill="none" stroke="#c01010" stroke-width="1.1" /><line x1="-8" y1="0" x2="8" y2="0" stroke="#409090" stroke-width="1"/><line x1="0" y1="-8" x2="0" y2="8" stroke="#409090" stroke-width="1"/><line x1="-6" y1="-6" x2="6" y2="6" stroke="#c05050" stroke-width="1"/><line x1="-6" y1="6" x2="6" y2="-6" stroke="#c05050" stroke-width="1"/><rect x="-2" y="-2" width="4" height="4" fill="#c01010" stroke="none" stroke-width="1" /></g><g transform="translate(340.5,115)"><path d="M-6 7 L-6 -5 M-6 7 L1 -5 L1 7 M4 -7 L4 -3 M7 -7 L7 -3" stroke="#000" stroke-width="1.1" fill="none"/></g><g transform="translate(363.5,115)"><line x1="-8" y1="-4.5" x2="8" y2="-4.5" stroke="#000" stroke-width="1"/><line x1="-5.5" y1="-8" x2="-5.5" y2="-1" stroke="#000" stroke-width="1"/><line x1="-1.5" y1="-8" x2="-1.5" y2="-1" stroke="#000" stroke-width="1"/><line x1="2.5" y1="-8" x2="2.5" y2="-1" stroke="#000" stroke-width="1"/><line x1="6.5" y1="-8" x2="6.5" y2="-1" stroke="#000" stroke-width="1"/><text x="0" y="7.5" fill="#d01818" font-size="10.5px" font-family="'Liberation Sans','Noto Sans CJK SC',sans-serif" font-weight="bold" text-anchor="middle">神</text></g><g transform="translate(386.5,115)"><line x1="-8" y1="-4.5" x2="8" y2="-4.5" stroke="#000" stroke-width="1"/><line x1="-5.5" y1="-8" x2="-5.5" y2="-1" stroke="#000" stroke-width="1"/><line x1="-1.5" y1="-8" x2="-1.5" y2="-1" stroke="#000" stroke-width="1"/><line x1="2.5" y1="-8" x2="2.5" y2="-1" stroke="#000" stroke-width="1"/><line x1="6.5" y1="-8" x2="6.5" y2="-1" stroke="#000" stroke-width="1"/><text x="0" y="7.5" fill="#d01818" font-size="10.5px" font-family="'Liberation Sans','Noto Sans CJK SC',sans-serif" font-weight="bold" text-anchor="middle">赢</text></g><g transform="translate(409.5,115)"><line x1="-8" y1="-7" x2="8" y2="-7" stroke="#000" stroke-width="1.3"/><line x1="-8" y1="-7" x2="-8" y2="7" stroke="#000" stroke-width="1"/><line x1="8" y1="-7" x2="8" y2="7" stroke="#000" stroke-width="1"/><line x1="-6" y1="-3" x2="6" y2="-3" stroke="#000" stroke-width="1"/><line x1="-6" y1="1" x2="6" y2="1" stroke="#000" stroke-width="1"/><line x1="-4" y1="-7" x2="-4" y2="3" stroke="#000" stroke-width="1"/><line x1="0" y1="-7" x2="0" y2="3" stroke="#000" stroke-width="1"/><line x1="4" y1="-7" x2="4" y2="3" stroke="#000" stroke-width="1"/><text x="0" y="8.5" fill="#000" font-size="6px" font-family="'Liberation Sans','Noto Sans CJK SC',sans-serif" font-weight="bold" text-anchor="middle">123</text></g><g transform="translate(432.5,115)"><line x1="-7" y1="-7" x2="-7" y2="7" stroke="#000" stroke-width="1.2"/><line x1="7" y1="-7" x2="7" y2="7" stroke="#000" stroke-width="1.2"/><line x1="-5" y1="0" x2="5" y2="0" stroke="#000" stroke-width="1"/><line x1="0" y1="-6" x2="0" y2="6" stroke="#000" stroke-width="1"/><path d="M-5 0 L-2 -2.5 M-5 0 L-2 2.5 M5 0 L2 -2.5 M5 0 L2 2.5" stroke="#000" stroke-width="1" fill="none"/></g><line x1="446.5" y1="103" x2="446.5" y2="126" stroke="#a0a0a0" stroke-width="1"/><line x1="447.5" y1="103" x2="447.5" y2="126" stroke="#fff" stroke-width="1"/><line x1="451.5" y1="105" x2="451.5" y2="125" stroke="#a0a0a0" stroke-width="1"/><line x1="452.5" y1="105" x2="452.5" y2="125" stroke="#fff" stroke-width="1"/><g transform="translate(466,115)"><rect x="-4" y="-6" width="10" height="10" fill="#fff" stroke="#000" stroke-width="1.3" /><line x1="-8" y1="-4" x2="-8" y2="5" stroke="#707070" stroke-width="1"/><line x1="-9" y1="-4" x2="-5" y2="-4" stroke="#707070" stroke-width="1"/><line x1="-4" y1="7" x2="6" y2="7" stroke="#707070" stroke-width="1"/><line x1="-4" y1="6" x2="-4" y2="9" stroke="#707070" stroke-width="1"/><line x1="6" y1="6" x2="6" y2="9" stroke="#707070" stroke-width="1"/></g><g transform="translate(489,115)"><line x1="-7" y1="7" x2="-5" y2="-7" stroke="#c01010" stroke-width="1.1"/><line x1="-7" y1="7" x2="0" y2="-7" stroke="#c01010" stroke-width="1.1"/><line x1="-7" y1="7" x2="6" y2="-6" stroke="#c01010" stroke-width="1.1"/><line x1="-7" y1="7" x2="8" y2="-1" stroke="#c01010" stroke-width="1.1"/><line x1="-7" y1="7" x2="8" y2="4" stroke="#c01010" stroke-width="1.1"/><rect x="-8" y="5" width="3" height="3" fill="#c01010" stroke="none" stroke-width="1" /></g><g transform="translate(512,115)"><rect x="-6" y="-5" width="12" height="12" fill="none" stroke="#101060" stroke-width="1.3" /><line x1="-6" y1="7" x2="-2" y2="-5" stroke="#c01010" stroke-width="1"/><line x1="-6" y1="7" x2="6" y2="-5" stroke="#c01010" stroke-width="1"/><line x1="-6" y1="7" x2="6" y2="1" stroke="#a020a0" stroke-width="1"/><line x1="-6" y1="7" x2="2" y2="-7" stroke="#c01010" stroke-width="1"/><path d="M-6 7 L-6 2 L-1 7 Z" stroke="none" stroke-width="0" fill="#101060"/></g><g transform="translate(535,115)"><rect x="-7" y="-6" width="12" height="12" fill="none" stroke="#101060" stroke-width="1.3" /><line x1="-7" y1="-6" x2="7" y2="7" stroke="#c01010" stroke-width="1"/><line x1="-7" y1="-6" x2="7" y2="2" stroke="#c01010" stroke-width="1"/><line x1="-7" y1="-6" x2="2" y2="7" stroke="#c01010" stroke-width="1"/><line x1="-7" y1="-6" x2="5" y2="-2" stroke="#c01010" stroke-width="1"/><line x1="-7" y1="-6" x2="-2" y2="6" stroke="#c01010" stroke-width="1"/><path d="M-7 -6 L-2 -6 L-7 -1 Z" stroke="none" stroke-width="0" fill="#c01010"/></g><g transform="translate(558,115)"><line x1="-8" y1="7" x2="7" y2="-7" stroke="#000" stroke-width="1"/><line x1="-8" y1="7" x2="8" y2="-2" stroke="#000" stroke-width="1"/><line x1="-8" y1="7" x2="8" y2="3" stroke="#000" stroke-width="1"/><path d="M-8 7 L-3 5 L-4 3 Z" stroke="#000" stroke-width="1" fill="#000"/></g><g transform="translate(581,115)"><path d="M-7 -6 L-3 6 L1 -2 L4 5 L7 1" stroke="#202020" stroke-width="0.9" fill="none"/><line x1="-8" y1="7" x2="8" y2="7" stroke="#909090" stroke-width="1"/></g><g transform="translate(604,115)"><line x1="-7" y1="-7" x2="-7" y2="7" stroke="#c04040" stroke-width="0.9"/><line x1="-3.5" y1="-7" x2="-3.5" y2="7" stroke="#989898" stroke-width="0.9"/><line x1="0" y1="-7" x2="0" y2="7" stroke="#c04040" stroke-width="0.9"/><line x1="3.5" y1="-7" x2="3.5" y2="7" stroke="#989898" stroke-width="0.9"/><line x1="7" y1="-7" x2="7" y2="7" stroke="#c04040" stroke-width="0.9"/><line x1="-7" y1="-7" x2="7" y2="-7" stroke="#989898" stroke-width="0.9"/><line x1="-7" y1="-3.5" x2="7" y2="-3.5" stroke="#c04040" stroke-width="0.9"/><line x1="-7" y1="0" x2="7" y2="0" stroke="#989898" stroke-width="0.9"/><line x1="-7" y1="3.5" x2="7" y2="3.5" stroke="#c04040" stroke-width="0.9"/><line x1="-7" y1="7" x2="7" y2="7" stroke="#989898" stroke-width="0.9"/></g><g transform="translate(627,115)"><line x1="-4" y1="-7" x2="-4" y2="5" stroke="#c04040" stroke-width="0.9"/><line x1="-1" y1="-7" x2="-1" y2="5" stroke="#989898" stroke-width="0.9"/><line x1="2" y1="-7" x2="2" y2="5" stroke="#c04040" stroke-width="0.9"/><line x1="5" y1="-7" x2="5" y2="5" stroke="#989898" stroke-width="0.9"/><line x1="-7" y1="-5" x2="5" y2="-5" stroke="#989898" stroke-width="0.9"/><line x1="-7" y1="-2" x2="5" y2="-2" stroke="#c04040" stroke-width="0.9"/><line x1="-7" y1="1" x2="5" y2="1" stroke="#989898" stroke-width="0.9"/><line x1="-7" y1="4" x2="5" y2="4" stroke="#c04040" stroke-width="0.9"/><line x1="-7" y1="-7" x2="-7" y2="7" stroke="#000" stroke-width="1.2"/><line x1="-7" y1="7" x2="7" y2="7" stroke="#000" stroke-width="1.2"/><path d="M7 7 L4 5 M7 7 L4 9" stroke="#000" stroke-width="1" fill="none"/></g><g transform="translate(650,115)"><line x1="-7" y1="-1" x2="7" y2="-7" stroke="#505050" stroke-width="1"/><line x1="-7" y1="3" x2="7" y2="-3" stroke="#505050" stroke-width="1"/><line x1="-7" y1="7" x2="7" y2="1" stroke="#505050" stroke-width="1"/><line x1="-5" y1="-4" x2="-5" y2="8" stroke="#505050" stroke-width="1"/><line x1="5" y1="-8" x2="5" y2="4" stroke="#505050" stroke-width="1"/></g><line x1="662.5" y1="103" x2="662.5" y2="126" stroke="#a0a0a0" stroke-width="1"/><line x1="663.5" y1="103" x2="663.5" y2="126" stroke="#fff" stroke-width="1"/><line x1="668.5" y1="105" x2="668.5" y2="125" stroke="#a0a0a0" stroke-width="1"/><line x1="669.5" y1="105" x2="669.5" y2="125" stroke="#fff" stroke-width="1"/><g transform="translate(682.5,115)"><line x1="-4" y1="-7" x2="-4" y2="7" stroke="#000" stroke-width="1.3"/><line x1="-7" y1="-6" x2="-1" y2="-6" stroke="#000" stroke-width="1.2"/><line x1="-7" y1="-2" x2="-1" y2="-2" stroke="#000" stroke-width="1.2"/><line x1="-7" y1="2" x2="-1" y2="2" stroke="#000" stroke-width="1.2"/><line x1="-7" y1="6" x2="-1" y2="6" stroke="#000" stroke-width="1.2"/><line x1="1" y1="-6" x2="6" y2="-6" stroke="#000" stroke-width="1.2"/><line x1="1" y1="-2" x2="6" y2="-2" stroke="#000" stroke-width="1.2"/><line x1="1" y1="2" x2="6" y2="2" stroke="#000" stroke-width="1.2"/><line x1="1" y1="6" x2="6" y2="6" stroke="#000" stroke-width="1.2"/></g><g transform="translate(705.5,115)"><line x1="-7" y1="-7" x2="8" y2="-7" stroke="#d01818" stroke-width="1.3"/><line x1="-7" y1="7" x2="1" y2="-7" stroke="#000" stroke-width="1.2"/><text x="3" y="8" fill="#d01818" font-size="11px" font-family="'Liberation Sans','Noto Sans CJK SC',sans-serif" font-weight="normal" text-anchor="middle">%</text></g><g transform="translate(728.5,115)"><text x="0" y="5" fill="#000" font-size="15px" font-family="'Liberation Sans','Noto Sans CJK SC',sans-serif" font-weight="normal" text-anchor="middle">%</text></g><g transform="translate(751.5,115)"><line x1="-7" y1="-7" x2="8" y2="-7" stroke="#000" stroke-width="1.2"/><line x1="-7" y1="7" x2="8" y2="7" stroke="#000" stroke-width="1.2"/><line x1="1" y1="-2" x2="8" y2="-2" stroke="#000" stroke-width="1.2"/><line x1="1" y1="2" x2="8" y2="2" stroke="#000" stroke-width="1.2"/><text x="-3" y="5" fill="#d01818" font-size="10px" font-family="'Liberation Sans','Noto Sans CJK SC',sans-serif" font-weight="normal" text-anchor="middle">%</text></g><g transform="translate(774.5,115)"><circle r="7.5" fill="#f8f8e8" stroke="#909090" stroke-width="1"/><text x="0" y="4" fill="#8c8c00" font-size="10px" font-family="'Liberation Sans','Noto Sans CJK SC',sans-serif" font-weight="normal" text-anchor="middle">金</text></g><g transform="translate(797.5,115)"><line x1="-7" y1="-7" x2="8" y2="-7" stroke="#000" stroke-width="1.2"/><line x1="-7" y1="7" x2="8" y2="7" stroke="#000" stroke-width="1.2"/><line x1="3" y1="-2" x2="8" y2="-2" stroke="#000" stroke-width="1.2"/><line x1="3" y1="2" x2="8" y2="2" stroke="#000" stroke-width="1.2"/><text x="-3" y="5" fill="#8c8c00" font-size="10px" font-family="'Liberation Sans','Noto Sans CJK SC',sans-serif" font-weight="normal" text-anchor="middle">金</text></g><g transform="translate(820.5,115)"><line x1="-6" y1="-7" x2="-6" y2="7" stroke="#000" stroke-width="1.4"/><line x1="-8" y1="-5" x2="-4" y2="-5" stroke="#000" stroke-width="1"/><line x1="-8" y1="-1" x2="-4" y2="-1" stroke="#000" stroke-width="1"/><line x1="-8" y1="3" x2="-4" y2="3" stroke="#000" stroke-width="1"/><line x1="-8" y1="7" x2="-4" y2="7" stroke="#000" stroke-width="1"/><g transform="translate(3,0)"><g transform="rotate(-10) translate(0.5,0)"><path d="M-6 7 L-4.5 -1 L1 -6.5 L6.5 -1 L1 4.5 Z" stroke="#303030" stroke-width="1" fill="#b8b8b8"/><path d="M-2 -1 L1 -4 L4 -1 L0 3 Z" stroke="none" stroke-width="0" fill="#e8e8e8"/><path d="M0 -6.5 L3 -9 L8 -3.5 L6 -0.5 Z" stroke="#c01010" stroke-width="1" fill="#e01818"/><path d="M-6 7 L-5 2.5 L-1.5 5.5 Z" stroke="#000" stroke-width="1" fill="#000"/><line x1="-8.5" y1="3.5" x2="-6" y2="7" stroke="#000" stroke-width="1.2"/></g></g></g><g transform="translate(843.5,115)"><line x1="-8" y1="-7" x2="8" y2="-7" stroke="#d01818" stroke-width="1.2"/><line x1="-8" y1="7" x2="8" y2="7" stroke="#d01818" stroke-width="1.2"/><path d="M-8 2 Q-5 -10 -1 0 Q2 9 5 0 Q7 -6 8 -3" stroke="#707070" stroke-width="1" fill="none"/><line x1="-8" y1="0" x2="8" y2="0" stroke="#b0b0b0" stroke-width="0.8"/></g><g transform="translate(866.5,115)"><line x1="-8" y1="-7" x2="8" y2="-7" stroke="#d01818" stroke-width="1.2"/><line x1="-8" y1="7" x2="8" y2="7" stroke="#d01818" stroke-width="1.2"/><text x="0" y="4.5" fill="#8c8c00" font-size="11px" font-family="'Liberation Sans','Noto Sans CJK SC',sans-serif" font-weight="normal" text-anchor="middle">金</text></g><g transform="translate(889.5,115)"><line x1="-7" y1="7" x2="8" y2="-6" stroke="#000" stroke-width="1"/><line x1="-7" y1="7" x2="8" y2="1" stroke="#000" stroke-width="1"/><line x1="-7" y1="7" x2="8" y2="7" stroke="#000" stroke-width="1"/><line x1="-2" y1="3" x2="8" y2="3" stroke="#000" stroke-width="1"/><text x="-3" y="1" fill="#d01818" font-size="11px" font-family="'Liberation Sans','Noto Sans CJK SC',sans-serif" font-weight="bold" text-anchor="middle">J</text></g><g transform="translate(912.5,115)"><line x1="-7" y1="7" x2="8" y2="-6" stroke="#000" stroke-width="1"/><line x1="-7" y1="7" x2="8" y2="1" stroke="#000" stroke-width="1"/><line x1="-7" y1="7" x2="8" y2="7" stroke="#000" stroke-width="1"/><line x1="-2" y1="3" x2="8" y2="3" stroke="#000" stroke-width="1"/><text x="-3" y="1" fill="#d01818" font-size="11px" font-family="'Liberation Sans','Noto Sans CJK SC',sans-serif" font-weight="bold" text-anchor="middle">F</text></g><g transform="translate(935.5,115)"><line x1="-7" y1="7" x2="8" y2="-6" stroke="#000" stroke-width="1"/><line x1="-7" y1="7" x2="8" y2="1" stroke="#000" stroke-width="1"/><line x1="-7" y1="7" x2="8" y2="7" stroke="#000" stroke-width="1"/><line x1="-2" y1="3" x2="8" y2="3" stroke="#000" stroke-width="1"/><text x="-3" y="1" fill="#8c8c00" font-size="10px" font-family="'Liberation Sans','Noto Sans CJK SC',sans-serif" font-weight="normal" text-anchor="middle">金</text></g><g transform="translate(958.5,115)"><line x1="-7" y1="7" x2="8" y2="-6" stroke="#000" stroke-width="1"/><line x1="-7" y1="7" x2="8" y2="1" stroke="#000" stroke-width="1"/><line x1="-7" y1="7" x2="8" y2="7" stroke="#000" stroke-width="1"/><line x1="-2" y1="3" x2="8" y2="3" stroke="#000" stroke-width="1"/><text x="-3" y="1" fill="#d01818" font-size="10px" font-family="'Liberation Sans','Noto Sans CJK SC',sans-serif" font-weight="normal" text-anchor="middle">神</text></g><g transform="translate(981.5,115)"><line x1="-7" y1="7" x2="8" y2="-6" stroke="#000" stroke-width="1"/><line x1="-7" y1="7" x2="8" y2="1" stroke="#000" stroke-width="1"/><line x1="-7" y1="7" x2="8" y2="7" stroke="#000" stroke-width="1"/><line x1="-2" y1="3" x2="8" y2="3" stroke="#000" stroke-width="1"/><text x="-3" y="1" fill="#d01818" font-size="10px" font-family="'Liberation Sans','Noto Sans CJK SC',sans-serif" font-weight="normal" text-anchor="middle">赢</text></g><g transform="translate(1004.5,115)"><line x1="-7" y1="7" x2="8" y2="-6" stroke="#000" stroke-width="1"/><line x1="-7" y1="7" x2="8" y2="1" stroke="#000" stroke-width="1"/><line x1="-7" y1="7" x2="8" y2="7" stroke="#000" stroke-width="1"/><line x1="-2" y1="3" x2="8" y2="3" stroke="#000" stroke-width="1"/><text x="-3" y="1" fill="#d01818" font-size="10px" font-family="'Liberation Sans','Noto Sans CJK SC',sans-serif" font-weight="normal" text-anchor="middle">四</text></g>
</svg>
<svg id="chart" width="1240" height="685" viewBox="0 0 1240 685" style="position:absolute;left:0;top:0">
<g shape-rendering="crispEdges">
<rect x="70" y="141" width="1170" height="1" fill="#a8a8a8"/>
<rect x="70" y="167" width="1104" height="1" fill="#b41c1c"/>
<rect x="70" y="228" width="1083" height="1" fill="#707070"/>
<rect x="70" y="258" width="1090" height="1" fill="#701c70"/>
<rect x="70" y="288" width="1083" height="1" fill="#141498"/>
<rect x="70" y="349" width="1104" height="1" fill="#b41c1c"/>
<rect x="70" y="410" width="1090" height="1" fill="#707070"/>
<rect x="70" y="440" width="1097" height="1" fill="#701c70"/>
<rect x="70" y="470" width="1090" height="1" fill="#141498"/>
<line x1="1029" y1="199.5" x2="1238" y2="199.5" stroke="#808080" stroke-width="1" stroke-dasharray="5,2"/>
<line x1="70" y1="524.5" x2="1240" y2="524.5" stroke="#a8a8a8" stroke-width="1" stroke-dasharray="3,3"/>
<line x1="70" y1="542.5" x2="1240" y2="542.5" stroke="#a8a8a8" stroke-width="1" stroke-dasharray="3,3"/>
<line x1="70" y1="558.5" x2="1240" y2="558.5" stroke="#a8a8a8" stroke-width="1" stroke-dasharray="3,3"/>
<line x1="70" y1="574.5" x2="1240" y2="574.5" stroke="#a8a8a8" stroke-width="1" stroke-dasharray="3,3"/>
<rect x="70" y="531" width="1118" height="1" fill="#a82020"/>
<line x1="67" y1="612.5" x2="1240" y2="612.5" stroke="#a8a8a8" stroke-width="1" stroke-dasharray="3,3"/>
<line x1="67" y1="630.5" x2="1240" y2="630.5" stroke="#a8a8a8" stroke-width="1" stroke-dasharray="3,3"/>
<line x1="67" y1="648.5" x2="1240" y2="648.5" stroke="#a8a8a8" stroke-width="1" stroke-dasharray="3,3"/>
<line x1="67" y1="667.5" x2="1240" y2="667.5" stroke="#a8a8a8" stroke-width="1" stroke-dasharray="3,3"/>
<rect x="70" y="607" width="1170" height="1" fill="#a8a8a8"/>
<rect x="0" y="590" width="1240" height="2" fill="#808080"/>
<rect x="70" y="584" width="6" height="6" fill="#0a780a"/>
<rect x="77.5" y="584.5" width="5" height="5" fill="#fff0f0" fill-opacity=".6" stroke="#c01818" stroke-width="1"/>
<rect x="84" y="582" width="6" height="8" fill="#0a780a"/>
<rect x="91.5" y="583.5" width="5" height="6" fill="#fff0f0" fill-opacity=".6" stroke="#c01818" stroke-width="1"/>
<rect x="98" y="583" width="6" height="7" fill="#0a780a"/>
<rect x="105" y="583" width="6" height="7" fill="#0a780a"/>
<rect x="112.5" y="582.5" width="5" height="7" fill="#fff0f0" fill-opacity=".6" stroke="#c01818" stroke-width="1"/>
<rect x="119" y="582" width="6" height="8" fill="#0a780a"/>
<rect x="126" y="582" width="6" height="8" fill="#0a780a"/>
<rect x="133" y="583" width="6" height="7" fill="#0a780a"/>
<rect x="140" y="583" width="6" height="7" fill="#0a780a"/>
<rect x="147.5" y="583.5" width="5" height="6" fill="#fff0f0" fill-opacity=".6" stroke="#c01818" stroke-width="1"/>
<rect x="154" y="583" width="6" height="7" fill="#0a780a"/>
<rect x="161.5" y="583.5" width="5" height="6" fill="#fff0f0" fill-opacity=".6" stroke="#c01818" stroke-width="1"/>
<rect x="168.5" y="582.5" width="5" height="7" fill="#fff0f0" fill-opacity=".6" stroke="#c01818" stroke-width="1"/>
<rect x="175.5" y="582.5" width="5" height="7" fill="#fff0f0" fill-opacity=".6" stroke="#c01818" stroke-width="1"/>
<rect x="182.5" y="582.5" width="5" height="7" fill="#fff0f0" fill-opacity=".6" stroke="#c01818" stroke-width="1"/>
<rect x="189.5" y="580.5" width="5" height="9" fill="#fff0f0" fill-opacity=".6" stroke="#c01818" stroke-width="1"/>
<rect x="196.5" y="580.5" width="5" height="9" fill="#fff0f0" fill-opacity=".6" stroke="#c01818" stroke-width="1"/>
<rect x="203" y="581" width="6" height="9" fill="#0a780a"/>
<rect x="210" y="581" width="6" height="9" fill="#0a780a"/>
<rect x="217" y="580" width="6" height="10" fill="#0a780a"/>
<rect x="224.5" y="583.5" width="5" height="6" fill="#fff0f0" fill-opacity=".6" stroke="#c01818" stroke-width="1"/>
<rect x="231" y="583" width="6" height="7" fill="#0a780a"/>
<rect x="238.5" y="583.5" width="5" height="6" fill="#fff0f0" fill-opacity=".6" stroke="#c01818" stroke-width="1"/>
<rect x="245" y="583" width="6" height="7" fill="#0a780a"/>
<rect x="252.5" y="582.5" width="5" height="7" fill="#fff0f0" fill-opacity=".6" stroke="#c01818" stroke-width="1"/>
<rect x="259.5" y="580.5" width="5" height="9" fill="#fff0f0" fill-opacity=".6" stroke="#c01818" stroke-width="1"/>
<rect x="266.5" y="580.5" width="5" height="9" fill="#fff0f0" fill-opacity=".6" stroke="#c01818" stroke-width="1"/>
<rect x="273" y="580" width="6" height="10" fill="#0a780a"/>
<rect x="280.5" y="579.5" width="5" height="10" fill="#fff0f0" fill-opacity=".6" stroke="#c01818" stroke-width="1"/>
<rect x="287.5" y="577.5" width="5" height="12" fill="#fff0f0" fill-opacity=".6" stroke="#c01818" stroke-width="1"/>
<rect x="294" y="579" width="6" height="11" fill="#0a780a"/>
<rect x="301.5" y="580.5" width="5" height="9" fill="#fff0f0" fill-opacity=".6" stroke="#c01818" stroke-width="1"/>
<rect x="308.5" y="580.5" width="5" height="9" fill="#fff0f0" fill-opacity=".6" stroke="#c01818" stroke-width="1"/>
<rect x="315" y="578" width="6" height="12" fill="#0a780a"/>
<rect x="322.5" y="580.5" width="5" height="9" fill="#fff0f0" fill-opacity=".6" stroke="#c01818" stroke-width="1"/>
<rect x="329.5" y="579.5" width="5" height="10" fill="#fff0f0" fill-opacity=".6" stroke="#c01818" stroke-width="1"/>
<rect x="336.5" y="578.5" width="5" height="11" fill="#fff0f0" fill-opacity=".6" stroke="#c01818" stroke-width="1"/>
<rect x="343.5" y="577.5" width="5" height="12" fill="#fff0f0" fill-opacity=".6" stroke="#c01818" stroke-width="1"/>
<rect x="350" y="576" width="6" height="14" fill="#0a780a"/>
<rect x="357" y="579" width="6" height="11" fill="#0a780a"/>
<rect x="364.5" y="579.5" width="5" height="10" fill="#fff0f0" fill-opacity=".6" stroke="#c01818" stroke-width="1"/>
<rect x="371" y="580" width="6" height="10" fill="#0a780a"/>
<rect x="378.5" y="577.5" width="5" height="12" fill="#fff0f0" fill-opacity=".6" stroke="#c01818" stroke-width="1"/>
<rect x="385.5" y="576.5" width="5" height="13" fill="#fff0f0" fill-opacity=".6" stroke="#c01818" stroke-width="1"/>
<rect x="392.5" y="573.5" width="5" height="16" fill="#fff0f0" fill-opacity=".6" stroke="#c01818" stroke-width="1"/>
<rect x="399.5" y="575.5" width="5" height="14" fill="#fff0f0" fill-opacity=".6" stroke="#c01818" stroke-width="1"/>
<rect x="406.5" y="566.5" width="5" height="23" fill="#fff0f0" fill-opacity=".6" stroke="#c01818" stroke-width="1"/>
<rect x="413.5" y="569.5" width="5" height="20" fill="#fff0f0" fill-opacity=".6" stroke="#c01818" stroke-width="1"/>
<rect x="420.5" y="571.5" width="5" height="18" fill="#fff0f0" fill-opacity=".6" stroke="#c01818" stroke-width="1"/>
<rect x="427.5" y="573.5" width="5" height="16" fill="#fff0f0" fill-opacity=".6" stroke="#c01818" stroke-width="1"/>
<rect x="434" y="570" width="6" height="20" fill="#0a780a"/>
<rect x="441.5" y="572.5" width="5" height="17" fill="#fff0f0" fill-opacity=".6" stroke="#c01818" stroke-width="1"/>
<rect x="448" y="572" width="6" height="18" fill="#0a780a"/>
<rect x="455.5" y="572.5" width="5" height="17" fill="#fff0f0" fill-opacity=".6" stroke="#c01818" stroke-width="1"/>
<rect x="462" y="572" width="6" height="18" fill="#0a780a"/>
<rect x="469.5" y="576.5" width="5" height="13" fill="#fff0f0" fill-opacity=".6" stroke="#c01818" stroke-width="1"/>
<rect x="476.5" y="574.5" width="5" height="15" fill="#fff0f0" fill-opacity=".6" stroke="#c01818" stroke-width="1"/>
<rect x="483" y="574" width="6" height="16" fill="#0a780a"/>
<rect x="490" y="572" width="6" height="18" fill="#0a780a"/>
<rect x="497" y="572" width="6" height="18" fill="#0a780a"/>
<rect x="504.5" y="575.5" width="5" height="14" fill="#fff0f0" fill-opacity=".6" stroke="#c01818" stroke-width="1"/>
<rect x="511.5" y="573.5" width="5" height="16" fill="#fff0f0" fill-opacity=".6" stroke="#c01818" stroke-width="1"/>
<rect x="518.5" y="572.5" width="5" height="17" fill="#fff0f0" fill-opacity=".6" stroke="#c01818" stroke-width="1"/>
<rect x="525" y="573" width="6" height="17" fill="#0a780a"/>
<rect x="532" y="573" width="6" height="17" fill="#0a780a"/>
<rect x="539.5" y="574.5" width="5" height="15" fill="#fff0f0" fill-opacity=".6" stroke="#c01818" stroke-width="1"/>
<rect x="546" y="573" width="6" height="17" fill="#0a780a"/>
<rect x="553" y="573" width="6" height="17" fill="#0a780a"/>
<rect x="560.5" y="578.5" width="5" height="11" fill="#fff0f0" fill-opacity=".6" stroke="#c01818" stroke-width="1"/>
<rect x="567" y="577" width="6" height="13" fill="#0a780a"/>
<rect x="574.5" y="579.5" width="5" height="10" fill="#fff0f0" fill-opacity=".6" stroke="#c01818" stroke-width="1"/>
<rect x="581.5" y="577.5" width="5" height="12" fill="#fff0f0" fill-opacity=".6" stroke="#c01818" stroke-width="1"/>
<rect x="588.5" y="570.5" width="5" height="19" fill="#fff0f0" fill-opacity=".6" stroke="#c01818" stroke-width="1"/>
<rect x="595.5" y="568.5" width="5" height="21" fill="#fff0f0" fill-opacity=".6" stroke="#c01818" stroke-width="1"/>
<rect x="602.5" y="569.5" width="5" height="20" fill="#fff0f0" fill-opacity=".6" stroke="#c01818" stroke-width="1"/>
<rect x="609.5" y="568.5" width="5" height="21" fill="#fff0f0" fill-opacity=".6" stroke="#c01818" stroke-width="1"/>
<rect x="616" y="570" width="6" height="20" fill="#0a780a"/>
<rect x="623" y="570" width="6" height="20" fill="#0a780a"/>
<rect x="630" y="567" width="6" height="23" fill="#0a780a"/>
<rect x="637.5" y="570.5" width="5" height="19" fill="#fff0f0" fill-opacity=".6" stroke="#c01818" stroke-width="1"/>
<rect x="644.5" y="568.5" width="5" height="21" fill="#fff0f0" fill-opacity=".6" stroke="#c01818" stroke-width="1"/>
<rect x="651" y="559" width="6" height="31" fill="#0a780a"/>
<rect x="658.5" y="568.5" width="5" height="21" fill="#fff0f0" fill-opacity=".6" stroke="#c01818" stroke-width="1"/>
<rect x="665.5" y="571.5" width="5" height="18" fill="#fff0f0" fill-opacity=".6" stroke="#c01818" stroke-width="1"/>
<rect x="672.5" y="572.5" width="5" height="17" fill="#fff0f0" fill-opacity=".6" stroke="#c01818" stroke-width="1"/>
<rect x="679" y="572" width="6" height="18" fill="#0a780a"/>
<rect x="686.5" y="574.5" width="5" height="15" fill="#fff0f0" fill-opacity=".6" stroke="#c01818" stroke-width="1"/>
<rect x="693.5" y="567.5" width="5" height="22" fill="#fff0f0" fill-opacity=".6" stroke="#c01818" stroke-width="1"/>
<rect x="700" y="567" width="6" height="23" fill="#0a780a"/>
<rect x="707.5" y="572.5" width="5" height="17" fill="#fff0f0" fill-opacity=".6" stroke="#c01818" stroke-width="1"/>
<rect x="714.5" y="569.5" width="5" height="20" fill="#fff0f0" fill-opacity=".6" stroke="#c01818" stroke-width="1"/>
<rect x="721.5" y="570.5" width="5" height="19" fill="#fff0f0" fill-opacity=".6" stroke="#c01818" stroke-width="1"/>
<rect x="728.5" y="569.5" width="5" height="20" fill="#fff0f0" fill-opacity=".6" stroke="#c01818" stroke-width="1"/>
<rect x="735.5" y="566.5" width="5" height="23" fill="#fff0f0" fill-opacity=".6" stroke="#c01818" stroke-width="1"/>
<rect x="742" y="567" width="6" height="23" fill="#0a780a"/>
<rect x="749" y="569" width="6" height="21" fill="#0a780a"/>
<rect x="756" y="570" width="6" height="20" fill="#0a780a"/>
<rect x="763.5" y="569.5" width="5" height="20" fill="#fff0f0" fill-opacity=".6" stroke="#c01818" stroke-width="1"/>
<rect x="770" y="564" width="6" height="26" fill="#0a780a"/>
<rect x="777" y="568" width="6" height="22" fill="#0a780a"/>
<rect x="784.5" y="574.5" width="5" height="15" fill="#fff0f0" fill-opacity=".6" stroke="#c01818" stroke-width="1"/>
<rect x="791" y="573" width="6" height="17" fill="#0a780a"/>
<rect x="798" y="574" width="6" height="16" fill="#0a780a"/>
<rect x="805" y="573" width="6" height="17" fill="#0a780a"/>
<rect x="812" y="576" width="6" height="14" fill="#0a780a"/>
<rect x="819" y="577" width="6" height="13" fill="#0a780a"/>
<rect x="826.5" y="573.5" width="5" height="16" fill="#fff0f0" fill-opacity=".6" stroke="#c01818" stroke-width="1"/>
<rect x="833.5" y="563.5" width="5" height="26" fill="#fff0f0" fill-opacity=".6" stroke="#c01818" stroke-width="1"/>
<rect x="840.5" y="560.5" width="5" height="29" fill="#fff0f0" fill-opacity=".6" stroke="#c01818" stroke-width="1"/>
<rect x="847.5" y="556.5" width="5" height="33" fill="#fff0f0" fill-opacity=".6" stroke="#c01818" stroke-width="1"/>
<rect x="854.5" y="560.5" width="5" height="29" fill="#fff0f0" fill-opacity=".6" stroke="#c01818" stroke-width="1"/>
<rect x="861.5" y="559.5" width="5" height="30" fill="#fff0f0" fill-opacity=".6" stroke="#c01818" stroke-width="1"/>
<rect x="868" y="563" width="6" height="27" fill="#0a780a"/>
<rect x="875.5" y="568.5" width="5" height="21" fill="#fff0f0" fill-opacity=".6" stroke="#c01818" stroke-width="1"/>
<rect x="882" y="560" width="6" height="30" fill="#0a780a"/>
<rect x="889.5" y="560.5" width="5" height="29" fill="#fff0f0" fill-opacity=".6" stroke="#c01818" stroke-width="1"/>
<rect x="896" y="548" width="6" height="42" fill="#0a780a"/>
<rect x="903.5" y="564.5" width="5" height="25" fill="#fff0f0" fill-opacity=".6" stroke="#c01818" stroke-width="1"/>
<rect x="910" y="560" width="6" height="30" fill="#0a780a"/>
<rect x="917.5" y="568.5" width="5" height="21" fill="#fff0f0" fill-opacity=".6" stroke="#c01818" stroke-width="1"/>
<rect x="924" y="568" width="6" height="22" fill="#0a780a"/>
<rect x="931" y="569" width="6" height="21" fill="#0a780a"/>
<rect x="938" y="571" width="6" height="19" fill="#0a780a"/>
<rect x="945.5" y="574.5" width="5" height="15" fill="#fff0f0" fill-opacity=".6" stroke="#c01818" stroke-width="1"/>
<rect x="952.5" y="568.5" width="5" height="21" fill="#fff0f0" fill-opacity=".6" stroke="#c01818" stroke-width="1"/>
<rect x="959.5" y="554.5" width="5" height="35" fill="#fff0f0" fill-opacity=".6" stroke="#c01818" stroke-width="1"/>
<rect x="966.5" y="559.5" width="5" height="30" fill="#fff0f0" fill-opacity=".6" stroke="#c01818" stroke-width="1"/>
<rect x="973.5" y="556.5" width="5" height="33" fill="#fff0f0" fill-opacity=".6" stroke="#c01818" stroke-width="1"/>
<rect x="980.5" y="552.5" width="5" height="37" fill="#fff0f0" fill-opacity=".6" stroke="#c01818" stroke-width="1"/>
<rect x="987.5" y="543.5" width="5" height="46" fill="#fff0f0" fill-opacity=".6" stroke="#c01818" stroke-width="1"/>
<rect x="994" y="544" width="6" height="46" fill="#0a780a"/>
<rect x="1001.5" y="546.5" width="5" height="43" fill="#fff0f0" fill-opacity=".6" stroke="#c01818" stroke-width="1"/>
<rect x="1008.5" y="532.5" width="5" height="57" fill="#fff0f0" fill-opacity=".6" stroke="#c01818" stroke-width="1"/>
<rect x="1015.5" y="536.5" width="5" height="53" fill="#fff0f0" fill-opacity=".6" stroke="#c01818" stroke-width="1"/>
<rect x="1022.5" y="524.5" width="5" height="65" fill="#fff0f0" fill-opacity=".6" stroke="#c01818" stroke-width="1"/>
<rect x="73" y="480" width="1" height="4" fill="#0a780a"/>
<rect x="70" y="482" width="6" height="1" fill="#0a780a"/>
<rect x="80" y="483" width="1" height="5" fill="#c01818"/>
<rect x="77.5" y="477.5" width="5" height="5" fill="none" stroke="#c01818" stroke-width="1"/>
<rect x="87" y="473" width="1" height="6" fill="#0a780a"/>
<rect x="84" y="478" width="6" height="1" fill="#0a780a"/>
<rect x="91.5" y="475.5" width="5" height="2" fill="none" stroke="#c01818" stroke-width="1"/>
<rect x="101" y="472" width="1" height="2" fill="#0a780a"/>
<rect x="98" y="472" width="6" height="1" fill="#0a780a"/>
<rect x="108" y="472" width="1" height="4" fill="#0a780a"/>
<rect x="105" y="474" width="6" height="1" fill="#0a780a"/>
<rect x="115" y="473" width="1" height="2" fill="#c01818"/>
<rect x="112.5" y="470.5" width="5" height="2" fill="none" stroke="#c01818" stroke-width="1"/>
<rect x="122" y="468" width="1" height="4" fill="#0a780a"/>
<rect x="119" y="469" width="6" height="3" fill="#0a780a"/>
<rect x="129" y="471" width="1" height="4" fill="#0a780a"/>
<rect x="126" y="473" width="6" height="1" fill="#0a780a"/>
<rect x="136" y="471" width="1" height="3" fill="#0a780a"/>
<rect x="133" y="473" width="6" height="1" fill="#0a780a"/>
<rect x="143" y="474" width="1" height="4" fill="#0a780a"/>
<rect x="140" y="474" width="6" height="3" fill="#0a780a"/>
<rect x="150" y="478" width="1" height="1" fill="#c01818"/>
<rect x="147.5" y="472.5" width="5" height="5" fill="none" stroke="#c01818" stroke-width="1"/>
<rect x="157" y="473" width="1" height="4" fill="#0a780a"/>
<rect x="154" y="473" width="6" height="3" fill="#0a780a"/>
<rect x="164" y="471" width="1" height="7" fill="#c01818"/>
<rect x="161" y="476" width="6" height="1" fill="#c01818"/>
<rect x="171" y="475" width="1" height="1" fill="#c01818"/>
<rect x="168.5" y="470.5" width="5" height="4" fill="none" stroke="#c01818" stroke-width="1"/>
<rect x="178" y="469" width="1" height="1" fill="#c01818"/>
<rect x="175" y="469" width="6" height="1" fill="#c01818"/>
<rect x="185" y="467" width="1" height="5" fill="#c01818"/>
<rect x="182" y="470" width="6" height="1" fill="#c01818"/>
<rect x="192" y="462" width="1" height="1" fill="#c01818"/>
<rect x="189.5" y="463.5" width="5" height="5" fill="none" stroke="#c01818" stroke-width="1"/>
<rect x="199" y="458" width="1" height="1" fill="#c01818"/>
<rect x="199" y="462" width="1" height="2" fill="#c01818"/>
<rect x="196.5" y="459.5" width="5" height="2" fill="none" stroke="#c01818" stroke-width="1"/>
<rect x="206" y="460" width="1" height="4" fill="#0a780a"/>
<rect x="203" y="460" width="6" height="3" fill="#0a780a"/>
<rect x="213" y="466" width="1" height="3" fill="#0a780a"/>
<rect x="210" y="466" width="6" height="1" fill="#0a780a"/>
<rect x="220" y="468" width="1" height="10" fill="#0a780a"/>
<rect x="217" y="468" width="6" height="9" fill="#0a780a"/>
<rect x="227" y="481" width="1" height="1" fill="#c01818"/>
<rect x="224.5" y="477.5" width="5" height="3" fill="none" stroke="#c01818" stroke-width="1"/>
<rect x="234" y="476" width="1" height="3" fill="#0a780a"/>
<rect x="231" y="478" width="6" height="1" fill="#0a780a"/>
<rect x="238.5" y="474.5" width="5" height="2" fill="none" stroke="#c01818" stroke-width="1"/>
<rect x="248" y="477" width="1" height="2" fill="#0a780a"/>
<rect x="245" y="477" width="6" height="1" fill="#0a780a"/>
<rect x="255" y="472" width="1" height="1" fill="#c01818"/>
<rect x="252.5" y="473.5" width="5" height="2" fill="none" stroke="#c01818" stroke-width="1"/>
<rect x="262" y="472" width="1" height="5" fill="#c01818"/>
<rect x="259" y="475" width="6" height="1" fill="#c01818"/>
<rect x="269" y="469" width="1" height="1" fill="#c01818"/>
<rect x="266.5" y="470.5" width="5" height="2" fill="none" stroke="#c01818" stroke-width="1"/>
<rect x="276" y="469" width="1" height="3" fill="#0a780a"/>
<rect x="273" y="469" width="6" height="1" fill="#0a780a"/>
<rect x="283" y="466" width="1" height="1" fill="#c01818"/>
<rect x="280.5" y="467.5" width="5" height="2" fill="none" stroke="#c01818" stroke-width="1"/>
<rect x="290" y="464" width="1" height="2" fill="#c01818"/>
<rect x="290" y="469" width="1" height="1" fill="#c01818"/>
<rect x="287.5" y="466.5" width="5" height="2" fill="none" stroke="#c01818" stroke-width="1"/>
<rect x="297" y="466" width="1" height="2" fill="#0a780a"/>
<rect x="294" y="466" width="6" height="1" fill="#0a780a"/>
<rect x="304" y="466" width="1" height="3" fill="#c01818"/>
<rect x="301" y="467" width="6" height="1" fill="#c01818"/>
<rect x="311" y="465" width="1" height="5" fill="#c01818"/>
<rect x="308" y="465" width="6" height="1" fill="#c01818"/>
<rect x="318" y="466" width="1" height="6" fill="#0a780a"/>
<rect x="315" y="466" width="6" height="6" fill="#0a780a"/>
<rect x="325" y="471" width="1" height="3" fill="#c01818"/>
<rect x="322" y="473" width="6" height="1" fill="#c01818"/>
<rect x="332" y="469" width="1" height="2" fill="#c01818"/>
<rect x="332" y="474" width="1" height="1" fill="#c01818"/>
<rect x="329.5" y="471.5" width="5" height="2" fill="none" stroke="#c01818" stroke-width="1"/>
<rect x="336.5" y="464.5" width="5" height="5" fill="none" stroke="#c01818" stroke-width="1"/>
<rect x="346" y="463" width="1" height="3" fill="#c01818"/>
<rect x="343" y="463" width="6" height="1" fill="#c01818"/>
<rect x="353" y="463" width="1" height="3" fill="#0a780a"/>
<rect x="350" y="464" width="6" height="1" fill="#0a780a"/>
<rect x="360" y="466" width="1" height="4" fill="#0a780a"/>
<rect x="357" y="466" width="6" height="2" fill="#0a780a"/>
<rect x="367" y="464" width="1" height="3" fill="#c01818"/>
<rect x="364.5" y="467.5" width="5" height="2" fill="none" stroke="#c01818" stroke-width="1"/>
<rect x="374" y="467" width="1" height="3" fill="#0a780a"/>
<rect x="371" y="467" width="6" height="1" fill="#0a780a"/>
<rect x="381" y="461" width="1" height="2" fill="#c01818"/>
<rect x="381" y="469" width="1" height="1" fill="#c01818"/>
<rect x="378.5" y="463.5" width="5" height="5" fill="none" stroke="#c01818" stroke-width="1"/>
<rect x="388" y="458" width="1" height="5" fill="#c01818"/>
<rect x="385" y="461" width="6" height="1" fill="#c01818"/>
<rect x="395" y="452" width="1" height="2" fill="#c01818"/>
<rect x="392.5" y="454.5" width="5" height="4" fill="none" stroke="#c01818" stroke-width="1"/>
<rect x="399.5" y="447.5" width="5" height="4" fill="none" stroke="#c01818" stroke-width="1"/>
<rect x="409" y="429" width="1" height="1" fill="#c01818"/>
<rect x="406.5" y="430.5" width="5" height="13" fill="none" stroke="#c01818" stroke-width="1"/>
<rect x="416" y="426" width="1" height="6" fill="#c01818"/>
<rect x="413" y="429" width="6" height="1" fill="#c01818"/>
<rect x="423" y="426" width="1" height="5" fill="#c01818"/>
<rect x="420" y="429" width="6" height="1" fill="#c01818"/>
<rect x="430" y="429" width="1" height="3" fill="#c01818"/>
<rect x="427.5" y="424.5" width="5" height="4" fill="none" stroke="#c01818" stroke-width="1"/>
<rect x="437" y="419" width="1" height="8" fill="#0a780a"/>
<rect x="434" y="426" width="6" height="1" fill="#0a780a"/>
<rect x="444" y="416" width="1" height="1" fill="#c01818"/>
<rect x="444" y="426" width="1" height="2" fill="#c01818"/>
<rect x="441.5" y="417.5" width="5" height="8" fill="none" stroke="#c01818" stroke-width="1"/>
<rect x="451" y="416" width="1" height="6" fill="#0a780a"/>
<rect x="448" y="416" width="6" height="1" fill="#0a780a"/>
<rect x="458" y="416" width="1" height="10" fill="#c01818"/>
<rect x="455" y="418" width="6" height="2" fill="#c01818"/>
<rect x="465" y="418" width="1" height="9" fill="#0a780a"/>
<rect x="462" y="419" width="6" height="8" fill="#0a780a"/>
<rect x="472" y="424" width="1" height="6" fill="#c01818"/>
<rect x="469" y="426" width="6" height="1" fill="#c01818"/>
<rect x="476.5" y="416.5" width="5" height="7" fill="none" stroke="#c01818" stroke-width="1"/>
<rect x="486" y="417" width="1" height="4" fill="#0a780a"/>
<rect x="483" y="417" width="6" height="1" fill="#0a780a"/>
<rect x="493" y="415" width="1" height="8" fill="#0a780a"/>
<rect x="490" y="417" width="6" height="1" fill="#0a780a"/>
<rect x="500" y="415" width="1" height="7" fill="#0a780a"/>
<rect x="497" y="417" width="6" height="5" fill="#0a780a"/>
<rect x="507" y="414" width="1" height="2" fill="#c01818"/>
<rect x="507" y="422" width="1" height="1" fill="#c01818"/>
<rect x="504.5" y="416.5" width="5" height="5" fill="none" stroke="#c01818" stroke-width="1"/>
<rect x="514" y="411" width="1" height="1" fill="#c01818"/>
<rect x="511.5" y="412.5" width="5" height="2" fill="none" stroke="#c01818" stroke-width="1"/>
<rect x="521" y="411" width="1" height="4" fill="#c01818"/>
<rect x="518" y="411" width="6" height="1" fill="#c01818"/>
<rect x="528" y="410" width="1" height="3" fill="#0a780a"/>
<rect x="525" y="411" width="6" height="1" fill="#0a780a"/>
<rect x="535" y="412" width="1" height="8" fill="#0a780a"/>
<rect x="532" y="412" width="6" height="2" fill="#0a780a"/>
<rect x="542" y="415" width="1" height="1" fill="#c01818"/>
<rect x="539.5" y="411.5" width="5" height="3" fill="none" stroke="#c01818" stroke-width="1"/>
<rect x="549" y="411" width="1" height="6" fill="#0a780a"/>
<rect x="546" y="411" width="6" height="4" fill="#0a780a"/>
<rect x="556" y="415" width="1" height="9" fill="#0a780a"/>
<rect x="553" y="416" width="6" height="6" fill="#0a780a"/>
<rect x="563" y="419" width="1" height="4" fill="#c01818"/>
<rect x="560" y="421" width="6" height="1" fill="#c01818"/>
<rect x="570" y="419" width="1" height="5" fill="#0a780a"/>
<rect x="567" y="421" width="6" height="3" fill="#0a780a"/>
<rect x="577" y="418" width="1" height="1" fill="#c01818"/>
<rect x="577" y="424" width="1" height="2" fill="#c01818"/>
<rect x="574.5" y="419.5" width="5" height="4" fill="none" stroke="#c01818" stroke-width="1"/>
<rect x="581.5" y="414.5" width="5" height="2" fill="none" stroke="#c01818" stroke-width="1"/>
<rect x="591" y="403" width="1" height="1" fill="#c01818"/>
<rect x="591" y="411" width="1" height="2" fill="#c01818"/>
<rect x="588.5" y="404.5" width="5" height="6" fill="none" stroke="#c01818" stroke-width="1"/>
<rect x="598" y="396" width="1" height="2" fill="#c01818"/>
<rect x="595.5" y="398.5" width="5" height="4" fill="none" stroke="#c01818" stroke-width="1"/>
<rect x="605" y="396" width="1" height="2" fill="#c01818"/>
<rect x="602.5" y="392.5" width="5" height="3" fill="none" stroke="#c01818" stroke-width="1"/>
<rect x="612" y="390" width="1" height="1" fill="#c01818"/>
<rect x="609.5" y="386.5" width="5" height="3" fill="none" stroke="#c01818" stroke-width="1"/>
<rect x="619" y="384" width="1" height="4" fill="#0a780a"/>
<rect x="616" y="386" width="6" height="1" fill="#0a780a"/>
<rect x="626" y="388" width="1" height="3" fill="#0a780a"/>
<rect x="623" y="388" width="6" height="1" fill="#0a780a"/>
<rect x="633" y="381" width="1" height="11" fill="#0a780a"/>
<rect x="630" y="388" width="6" height="2" fill="#0a780a"/>
<rect x="640" y="391" width="1" height="1" fill="#c01818"/>
<rect x="637.5" y="384.5" width="5" height="6" fill="none" stroke="#c01818" stroke-width="1"/>
<rect x="647" y="384" width="1" height="3" fill="#c01818"/>
<rect x="644.5" y="381.5" width="5" height="2" fill="none" stroke="#c01818" stroke-width="1"/>
<rect x="654" y="380" width="1" height="15" fill="#0a780a"/>
<rect x="651" y="381" width="6" height="13" fill="#0a780a"/>
<rect x="661" y="390" width="1" height="1" fill="#c01818"/>
<rect x="661" y="394" width="1" height="4" fill="#c01818"/>
<rect x="658.5" y="391.5" width="5" height="2" fill="none" stroke="#c01818" stroke-width="1"/>
<rect x="668" y="387" width="1" height="2" fill="#c01818"/>
<rect x="668" y="392" width="1" height="2" fill="#c01818"/>
<rect x="665.5" y="389.5" width="5" height="2" fill="none" stroke="#c01818" stroke-width="1"/>
<rect x="675" y="388" width="1" height="4" fill="#c01818"/>
<rect x="672.5" y="384.5" width="5" height="3" fill="none" stroke="#c01818" stroke-width="1"/>
<rect x="682" y="386" width="1" height="11" fill="#0a780a"/>
<rect x="679" y="386" width="6" height="10" fill="#0a780a"/>
<rect x="686.5" y="391.5" width="5" height="4" fill="none" stroke="#c01818" stroke-width="1"/>
<rect x="696" y="379" width="1" height="1" fill="#c01818"/>
<rect x="696" y="393" width="1" height="1" fill="#c01818"/>
<rect x="693.5" y="380.5" width="5" height="12" fill="none" stroke="#c01818" stroke-width="1"/>
<rect x="703" y="374" width="1" height="8" fill="#0a780a"/>
<rect x="700" y="377" width="6" height="2" fill="#0a780a"/>
<rect x="710" y="378" width="1" height="6" fill="#c01818"/>
<rect x="707" y="379" width="6" height="2" fill="#c01818"/>
<rect x="717" y="374" width="1" height="5" fill="#c01818"/>
<rect x="714" y="376" width="6" height="1" fill="#c01818"/>
<rect x="724" y="373" width="1" height="4" fill="#c01818"/>
<rect x="721" y="375" width="6" height="1" fill="#c01818"/>
<rect x="731" y="372" width="1" height="5" fill="#c01818"/>
<rect x="728.5" y="368.5" width="5" height="3" fill="none" stroke="#c01818" stroke-width="1"/>
<rect x="738" y="365" width="1" height="7" fill="#c01818"/>
<rect x="735" y="366" width="6" height="2" fill="#c01818"/>
<rect x="745" y="368" width="1" height="4" fill="#0a780a"/>
<rect x="742" y="370" width="6" height="1" fill="#0a780a"/>
<rect x="752" y="374" width="1" height="7" fill="#0a780a"/>
<rect x="749" y="374" width="6" height="1" fill="#0a780a"/>
<rect x="759" y="370" width="1" height="8" fill="#0a780a"/>
<rect x="756" y="374" width="6" height="1" fill="#0a780a"/>
<rect x="766" y="370" width="1" height="1" fill="#c01818"/>
<rect x="766" y="375" width="1" height="4" fill="#c01818"/>
<rect x="763.5" y="371.5" width="5" height="3" fill="none" stroke="#c01818" stroke-width="1"/>
<rect x="773" y="367" width="1" height="10" fill="#0a780a"/>
<rect x="770" y="376" width="6" height="1" fill="#0a780a"/>
<rect x="780" y="377" width="1" height="12" fill="#0a780a"/>
<rect x="777" y="377" width="6" height="4" fill="#0a780a"/>
<rect x="787" y="380" width="1" height="1" fill="#c01818"/>
<rect x="784.5" y="377.5" width="5" height="2" fill="none" stroke="#c01818" stroke-width="1"/>
<rect x="794" y="375" width="1" height="7" fill="#0a780a"/>
<rect x="791" y="376" width="6" height="5" fill="#0a780a"/>
<rect x="801" y="378" width="1" height="8" fill="#0a780a"/>
<rect x="798" y="381" width="6" height="3" fill="#0a780a"/>
<rect x="808" y="385" width="1" height="9" fill="#0a780a"/>
<rect x="805" y="386" width="6" height="6" fill="#0a780a"/>
<rect x="815" y="390" width="1" height="4" fill="#0a780a"/>
<rect x="812" y="392" width="6" height="1" fill="#0a780a"/>
<rect x="822" y="395" width="1" height="4" fill="#0a780a"/>
<rect x="819" y="395" width="6" height="1" fill="#0a780a"/>
<rect x="826.5" y="383.5" width="5" height="11" fill="none" stroke="#c01818" stroke-width="1"/>
<rect x="836" y="368" width="1" height="4" fill="#c01818"/>
<rect x="836" y="380" width="1" height="1" fill="#c01818"/>
<rect x="833.5" y="372.5" width="5" height="7" fill="none" stroke="#c01818" stroke-width="1"/>
<rect x="843" y="364" width="1" height="1" fill="#c01818"/>
<rect x="843" y="370" width="1" height="3" fill="#c01818"/>
<rect x="840.5" y="365.5" width="5" height="4" fill="none" stroke="#c01818" stroke-width="1"/>
<rect x="850" y="356" width="1" height="1" fill="#c01818"/>
<rect x="850" y="364" width="1" height="2" fill="#c01818"/>
<rect x="847.5" y="357.5" width="5" height="6" fill="none" stroke="#c01818" stroke-width="1"/>
<rect x="857" y="351" width="1" height="6" fill="#c01818"/>
<rect x="854" y="355" width="6" height="1" fill="#c01818"/>
<rect x="864" y="352" width="1" height="5" fill="#c01818"/>
<rect x="861" y="354" width="6" height="1" fill="#c01818"/>
<rect x="871" y="353" width="1" height="5" fill="#0a780a"/>
<rect x="868" y="353" width="6" height="4" fill="#0a780a"/>
<rect x="878" y="355" width="1" height="7" fill="#c01818"/>
<rect x="875" y="355" width="6" height="2" fill="#c01818"/>
<rect x="885" y="347" width="1" height="13" fill="#0a780a"/>
<rect x="882" y="354" width="6" height="3" fill="#0a780a"/>
<rect x="892" y="351" width="1" height="3" fill="#c01818"/>
<rect x="889.5" y="340.5" width="5" height="10" fill="none" stroke="#c01818" stroke-width="1"/>
<rect x="899" y="331" width="1" height="18" fill="#0a780a"/>
<rect x="896" y="337" width="6" height="4" fill="#0a780a"/>
<rect x="906" y="345" width="1" height="4" fill="#c01818"/>
<rect x="903.5" y="334.5" width="5" height="10" fill="none" stroke="#c01818" stroke-width="1"/>
<rect x="913" y="331" width="1" height="10" fill="#0a780a"/>
<rect x="910" y="334" width="6" height="3" fill="#0a780a"/>
<rect x="920" y="338" width="1" height="7" fill="#c01818"/>
<rect x="917" y="339" width="6" height="1" fill="#c01818"/>
<rect x="927" y="330" width="1" height="11" fill="#0a780a"/>
<rect x="924" y="330" width="6" height="10" fill="#0a780a"/>
<rect x="934" y="340" width="1" height="8" fill="#0a780a"/>
<rect x="931" y="340" width="6" height="6" fill="#0a780a"/>
<rect x="941" y="345" width="1" height="4" fill="#0a780a"/>
<rect x="938" y="347" width="6" height="1" fill="#0a780a"/>
<rect x="948" y="345" width="1" height="6" fill="#c01818"/>
<rect x="945" y="347" width="6" height="2" fill="#c01818"/>
<rect x="955" y="346" width="1" height="2" fill="#c01818"/>
<rect x="952.5" y="336.5" width="5" height="9" fill="none" stroke="#c01818" stroke-width="1"/>
<rect x="962" y="318" width="1" height="4" fill="#c01818"/>
<rect x="962" y="329" width="1" height="4" fill="#c01818"/>
<rect x="959.5" y="322.5" width="5" height="6" fill="none" stroke="#c01818" stroke-width="1"/>
<rect x="969" y="311" width="1" height="1" fill="#c01818"/>
<rect x="969" y="322" width="1" height="2" fill="#c01818"/>
<rect x="966.5" y="312.5" width="5" height="9" fill="none" stroke="#c01818" stroke-width="1"/>
<rect x="976" y="310" width="1" height="1" fill="#c01818"/>
<rect x="973.5" y="301.5" width="5" height="8" fill="none" stroke="#c01818" stroke-width="1"/>
<rect x="983" y="297" width="1" height="5" fill="#c01818"/>
<rect x="980.5" y="292.5" width="5" height="4" fill="none" stroke="#c01818" stroke-width="1"/>
<rect x="990" y="292" width="1" height="3" fill="#c01818"/>
<rect x="987.5" y="276.5" width="5" height="15" fill="none" stroke="#c01818" stroke-width="1"/>
<rect x="997" y="266" width="1" height="15" fill="#0a780a"/>
<rect x="994" y="274" width="6" height="3" fill="#0a780a"/>
<rect x="1004" y="248" width="1" height="4" fill="#c01818"/>
<rect x="1004" y="281" width="1" height="1" fill="#c01818"/>
<rect x="1001.5" y="252.5" width="5" height="28" fill="none" stroke="#c01818" stroke-width="1"/>
<rect x="1011" y="233" width="1" height="15" fill="#c01818"/>
<rect x="1011" y="251" width="1" height="9" fill="#c01818"/>
<rect x="1008.5" y="248.5" width="5" height="2" fill="none" stroke="#c01818" stroke-width="1"/>
<rect x="1018" y="246" width="1" height="3" fill="#c01818"/>
<rect x="1015.5" y="210.5" width="5" height="35" fill="none" stroke="#c01818" stroke-width="1"/>
<rect x="1025" y="186" width="1" height="13" fill="#c01818"/>
<rect x="1025" y="202" width="1" height="35" fill="#c01818"/>
<rect x="1022.5" y="199.5" width="5" height="2" fill="none" stroke="#c01818" stroke-width="1"/>
<rect x="80" y="667" width="1" height="1" fill="#c01818"/>
<rect x="87" y="667" width="1" height="1" fill="#c01818"/>
<rect x="94" y="666" width="1" height="2" fill="#c01818"/>
<rect x="101" y="666" width="1" height="2" fill="#c01818"/>
<rect x="108" y="666" width="1" height="2" fill="#c01818"/>
<rect x="115" y="666" width="1" height="2" fill="#c01818"/>
<rect x="122" y="666" width="1" height="2" fill="#c01818"/>
<rect x="129" y="666" width="1" height="2" fill="#c01818"/>
<rect x="136" y="666" width="1" height="2" fill="#c01818"/>
<rect x="143" y="666" width="1" height="2" fill="#c01818"/>
<rect x="150" y="666" width="1" height="2" fill="#c01818"/>
<rect x="157" y="666" width="1" height="2" fill="#c01818"/>
<rect x="164" y="666" width="1" height="2" fill="#c01818"/>
<rect x="171" y="666" width="1" height="2" fill="#c01818"/>
<rect x="178" y="666" width="1" height="2" fill="#c01818"/>
<rect x="185" y="666" width="1" height="2" fill="#c01818"/>
<rect x="192" y="665" width="1" height="3" fill="#c01818"/>
<rect x="199" y="664" width="1" height="4" fill="#c01818"/>
<rect x="206" y="664" width="1" height="4" fill="#c01818"/>
<rect x="213" y="665" width="1" height="3" fill="#c01818"/>
<rect x="220" y="666" width="1" height="2" fill="#c01818"/>
<rect x="227" y="667" width="1" height="1" fill="#c01818"/>
<rect x="374" y="667" width="1" height="1" fill="#c01818"/>
<rect x="381" y="667" width="1" height="1" fill="#c01818"/>
<rect x="388" y="666" width="1" height="2" fill="#c01818"/>
<rect x="395" y="665" width="1" height="3" fill="#c01818"/>
<rect x="402" y="663" width="1" height="5" fill="#c01818"/>
<rect x="409" y="658" width="1" height="10" fill="#c01818"/>
<rect x="416" y="655" width="1" height="13" fill="#c01818"/>
<rect x="423" y="655" width="1" height="13" fill="#c01818"/>
<rect x="430" y="656" width="1" height="12" fill="#c01818"/>
<rect x="437" y="656" width="1" height="12" fill="#c01818"/>
<rect x="444" y="656" width="1" height="12" fill="#c01818"/>
<rect x="451" y="657" width="1" height="11" fill="#c01818"/>
<rect x="458" y="659" width="1" height="9" fill="#c01818"/>
<rect x="465" y="661" width="1" height="7" fill="#c01818"/>
<rect x="472" y="666" width="1" height="2" fill="#c01818"/>
<rect x="479" y="666" width="1" height="2" fill="#c01818"/>
<rect x="486" y="667" width="1" height="1" fill="#c01818"/>
<rect x="514" y="668" width="1" height="1" fill="#0a780a"/>
<rect x="521" y="668" width="1" height="1" fill="#0a780a"/>
<rect x="528" y="668" width="1" height="1" fill="#0a780a"/>
<rect x="535" y="668" width="1" height="1" fill="#0a780a"/>
<rect x="549" y="668" width="1" height="2" fill="#0a780a"/>
<rect x="556" y="668" width="1" height="4" fill="#0a780a"/>
<rect x="563" y="668" width="1" height="5" fill="#0a780a"/>
<rect x="570" y="668" width="1" height="6" fill="#0a780a"/>
<rect x="577" y="668" width="1" height="7" fill="#0a780a"/>
<rect x="584" y="668" width="1" height="5" fill="#0a780a"/>
<rect x="591" y="668" width="1" height="3" fill="#0a780a"/>
<rect x="598" y="668" width="1" height="1" fill="#0a780a"/>
<rect x="605" y="667" width="1" height="1" fill="#c01818"/>
<rect x="612" y="665" width="1" height="3" fill="#c01818"/>
<rect x="619" y="664" width="1" height="4" fill="#c01818"/>
<rect x="626" y="665" width="1" height="3" fill="#c01818"/>
<rect x="633" y="665" width="1" height="3" fill="#c01818"/>
<rect x="640" y="665" width="1" height="3" fill="#c01818"/>
<rect x="647" y="664" width="1" height="4" fill="#c01818"/>
<rect x="654" y="666" width="1" height="2" fill="#c01818"/>
<rect x="661" y="667" width="1" height="1" fill="#c01818"/>
<rect x="675" y="668" width="1" height="1" fill="#0a780a"/>
<rect x="682" y="668" width="1" height="2" fill="#0a780a"/>
<rect x="689" y="668" width="1" height="2" fill="#0a780a"/>
<rect x="696" y="668" width="1" height="1" fill="#0a780a"/>
<rect x="724" y="667" width="1" height="1" fill="#c01818"/>
<rect x="731" y="667" width="1" height="1" fill="#c01818"/>
<rect x="738" y="667" width="1" height="1" fill="#c01818"/>
<rect x="745" y="667" width="1" height="1" fill="#c01818"/>
<rect x="759" y="668" width="1" height="1" fill="#0a780a"/>
<rect x="766" y="668" width="1" height="1" fill="#0a780a"/>
<rect x="773" y="668" width="1" height="2" fill="#0a780a"/>
<rect x="780" y="668" width="1" height="3" fill="#0a780a"/>
<rect x="787" y="668" width="1" height="4" fill="#0a780a"/>
<rect x="794" y="668" width="1" height="5" fill="#0a780a"/>
<rect x="801" y="668" width="1" height="6" fill="#0a780a"/>
<rect x="808" y="668" width="1" height="7" fill="#0a780a"/>
<rect x="815" y="668" width="1" height="8" fill="#0a780a"/>
<rect x="822" y="668" width="1" height="8" fill="#0a780a"/>
<rect x="829" y="668" width="1" height="7" fill="#0a780a"/>
<rect x="836" y="668" width="1" height="4" fill="#0a780a"/>
<rect x="850" y="665" width="1" height="3" fill="#c01818"/>
<rect x="857" y="663" width="1" height="5" fill="#c01818"/>
<rect x="864" y="662" width="1" height="6" fill="#c01818"/>
<rect x="871" y="662" width="1" height="6" fill="#c01818"/>
<rect x="878" y="662" width="1" height="6" fill="#c01818"/>
<rect x="885" y="662" width="1" height="6" fill="#c01818"/>
<rect x="892" y="662" width="1" height="6" fill="#c01818"/>
<rect x="899" y="661" width="1" height="7" fill="#c01818"/>
<rect x="906" y="661" width="1" height="7" fill="#c01818"/>
<rect x="913" y="661" width="1" height="7" fill="#c01818"/>
<rect x="920" y="663" width="1" height="5" fill="#c01818"/>
<rect x="927" y="664" width="1" height="4" fill="#c01818"/>
<rect x="934" y="667" width="1" height="1" fill="#c01818"/>
<rect x="941" y="668" width="1" height="1" fill="#0a780a"/>
<rect x="948" y="668" width="1" height="1" fill="#0a780a"/>
<rect x="955" y="668" width="1" height="1" fill="#0a780a"/>
<rect x="969" y="666" width="1" height="2" fill="#c01818"/>
<rect x="976" y="663" width="1" height="5" fill="#c01818"/>
<rect x="983" y="660" width="1" height="8" fill="#c01818"/>
<rect x="990" y="657" width="1" height="11" fill="#c01818"/>
<rect x="997" y="653" width="1" height="15" fill="#c01818"/>
<rect x="1004" y="652" width="1" height="16" fill="#c01818"/>
<rect x="1011" y="649" width="1" height="19" fill="#c01818"/>
<rect x="1018" y="646" width="1" height="22" fill="#c01818"/>
<rect x="1025" y="641" width="1" height="27" fill="#c01818"/>
<rect x="1032" y="637" width="1" height="31" fill="#c01818"/>
<rect x="1039" y="639" width="1" height="29" fill="#c01818"/>
<rect x="1046" y="641" width="1" height="27" fill="#c01818"/>
<rect x="1053" y="646" width="1" height="22" fill="#c01818"/>
<rect x="1060" y="650" width="1" height="18" fill="#c01818"/>
<rect x="1067" y="655" width="1" height="13" fill="#c01818"/>
<rect x="1074" y="660" width="1" height="8" fill="#c01818"/>
<rect x="1081" y="665" width="1" height="3" fill="#c01818"/>
<rect x="1102" y="668" width="1" height="3" fill="#0a780a"/>
<rect x="1109" y="668" width="1" height="7" fill="#0a780a"/>
<rect x="1116" y="668" width="1" height="9" fill="#0a780a"/>
<rect x="1123" y="668" width="1" height="12" fill="#0a780a"/>
<rect x="1130" y="668" width="1" height="14" fill="#0a780a"/>
<rect x="1137" y="668" width="1" height="17" fill="#0a780a"/>
<rect x="1144" y="668" width="1" height="17" fill="#0a780a"/>
<rect x="1151" y="668" width="1" height="17" fill="#0a780a"/>
<rect x="1158" y="668" width="1" height="17" fill="#0a780a"/>
<rect x="1165" y="668" width="1" height="17" fill="#0a780a"/>
<rect x="1172" y="668" width="1" height="17" fill="#0a780a"/>
<rect x="1179" y="668" width="1" height="17" fill="#0a780a"/>
<rect x="1186" y="668" width="1" height="17" fill="#0a780a"/>
<rect x="1193" y="668" width="1" height="17" fill="#0a780a"/>
<rect x="1200" y="668" width="1" height="17" fill="#0a780a"/>
<rect x="1207" y="668" width="1" height="17" fill="#0a780a"/>
<rect x="1214" y="668" width="1" height="17" fill="#0a780a"/>
<rect x="1221" y="668" width="1" height="17" fill="#0a780a"/>
<rect x="1228" y="668" width="1" height="17" fill="#0a780a"/>
<rect x="1235" y="668" width="1" height="17" fill="#0a780a"/>
</g>
<polyline fill="none" stroke="#101010" stroke-width="1" points="73,672.7 120,671 169,669.5 185,668 200,665 217,665.4 232,667.5 249,669 278,667.8 302,666.6 350,666.8 386,665.8 401,662.7 415,656.1 432,653 449,648.9 466,648.9 471,650.6 495,651.3 531,651.8 543.5,652.3 560.5,656.1 575,659 587,659 601.6,656.1 616,651.8 640,651 647,650.6 664,652.5 683.5,654.9 708,654.9 737,653 761,654.2 775.5,656.1 797,660.2 819,665.8 833.5,666.3 848,661.5 865,657.8 887,655.4 911,650.6 928,650.6 940,653 947.5,654.5 962.5,653 980,647 995,638.75 1010,630.5 1022.5,620 1032.5,611.25 1045,607.5 1060,607 1070,608.75 1090,613.75 1110,621.25 1130,627.5 1155,636.25 1180,642.5 1205,648.75 1235,653.25"/>
<polyline fill="none" stroke="#1a1aa0" stroke-width="1" points="73,672.9 95,672.8 120,672 169,670.5 200,667.3 217,666.6 232,667.5 249,668.8 278,668 302,666.8 350,666.8 386,666.3 401,665.1 415,662.7 432,659 449,654.9 459,653 471,651.8 495,651.3 531,651.3 560.5,653.7 580,656.1 592,656.6 606.5,655.4 623,653 640,652.5 664,652.5 683.5,653.7 708,654.9 737,653.7 761,653.7 775.5,654.9 797,657.3 819,661.5 836,663.4 848,662.7 865,661 887,658.5 911,654.2 928,652.5 940,652.5 947.5,653.75 962.5,653 980,650 995,645.75 1010,639.5 1022.5,632.5 1037.5,624.5 1055,617.5 1070,613.75 1085,613 1100,615 1120,618.75 1145,626.25 1170,632.5 1195,639.25 1217.5,645 1233.75,648"/>
<line shape-rendering="crispEdges" stroke="#1a1aa0" stroke-width="1" x1="1026" y1="186.5" x2="1045" y2="191.5"/>
<line shape-rendering="crispEdges" stroke="#1a1aa0" stroke-width="1" x1="81" y1="488.5" x2="100" y2="484"/>
<path d="M602 528 l3.5 -4 l3.5 4z" fill="#000"/>
<g font-family="'DejaVu Sans','Liberation Sans',sans-serif" font-size="11px">
<text x="1174" y="171.5" fill="#cc1a1a" textLength="61" lengthAdjust="spacingAndGlyphs">200.0%(0)</text>
<text x="1153" y="232.5" fill="#787878" textLength="82" lengthAdjust="spacingAndGlyphs">166.67%(240)</text>
<text x="1160" y="262.5" fill="#781c78" textLength="75" lengthAdjust="spacingAndGlyphs">150.0%(180)</text>
<text x="1153" y="292.5" fill="#1414b0" textLength="82" lengthAdjust="spacingAndGlyphs">133.33%(120)</text>
<text x="1174" y="353.5" fill="#cc1a1a" textLength="61" lengthAdjust="spacingAndGlyphs">100.0%(0)</text>
<text x="1160" y="414.5" fill="#787878" textLength="75" lengthAdjust="spacingAndGlyphs">66.67%(240)</text>
<text x="1167" y="444.5" fill="#781c78" textLength="68" lengthAdjust="spacingAndGlyphs">50.0%(180)</text>
<text x="1160" y="474.5" fill="#1414b0" textLength="75" lengthAdjust="spacingAndGlyphs">33.33%(120)</text>
<text x="1045.5" y="202" fill="#2626d0" textLength="59" lengthAdjust="spacingAndGlyphs">2978.0300</text>
<text x="101" y="486" fill="#2626d0" textLength="59" lengthAdjust="spacingAndGlyphs">1991.0601</text>
</g>
<g font-family="'Liberation Sans',sans-serif" font-size="9px" fill="#a0a0a0">
<text x="70.5" y="138.8" textLength="22" lengthAdjust="spacingAndGlyphs">05-20</text>
<text x="129.5" y="138.8" textLength="22" lengthAdjust="spacingAndGlyphs">06-04</text>
<text x="199.5" y="138.8" textLength="22" lengthAdjust="spacingAndGlyphs">06-18</text>
<text x="269.5" y="138.8" textLength="22" lengthAdjust="spacingAndGlyphs">07-02</text>
<text x="339.5" y="138.8" textLength="22" lengthAdjust="spacingAndGlyphs">07-16</text>
<text x="409.5" y="138.8" textLength="22" lengthAdjust="spacingAndGlyphs">07-30</text>
<text x="479.5" y="138.8" textLength="22" lengthAdjust="spacingAndGlyphs">08-13</text>
<text x="549.5" y="138.8" textLength="22" lengthAdjust="spacingAndGlyphs">08-27</text>
<text x="619.5" y="138.8" textLength="22" lengthAdjust="spacingAndGlyphs">09-11</text>
<text x="689.5" y="138.8" textLength="22" lengthAdjust="spacingAndGlyphs">09-25</text>
<text x="759.5" y="138.8" textLength="22" lengthAdjust="spacingAndGlyphs">10-16</text>
<text x="829.5" y="138.8" textLength="22" lengthAdjust="spacingAndGlyphs">10-30</text>
<text x="899.5" y="138.8" textLength="21" lengthAdjust="spacingAndGlyphs">11-13</text>
<text x="969.5" y="138.8" textLength="21" lengthAdjust="spacingAndGlyphs">11-27</text>
<text x="1039.5" y="138.8" textLength="21" lengthAdjust="spacingAndGlyphs">12-11</text>
<text x="1109.5" y="138.8" textLength="21" lengthAdjust="spacingAndGlyphs">12-25</text>
<text x="1179.5" y="138.8" textLength="21" lengthAdjust="spacingAndGlyphs">01-08</text>
</g>
<g font-family="'Liberation Serif','Noto Serif CJK SC',serif" font-size="12px">
<text y="145.5" fill="#1414b8" stroke="#1414b8" stroke-width=".15" font-size="12.5px" font-family="'Liberation Mono','Noto Sans CJK SC',sans-serif"><tspan x="3">日</tspan><tspan x="15" font-size="12.5px">K</tspan><tspan x="22.5">线</tspan></text>
<text x="1141" y="154" fill="#101090" stroke="#101090" stroke-width=".2" font-size="13.5px" textLength="38" lengthAdjust="spacingAndGlyphs">1A0001</text>
<text x="1189" y="154.5" fill="#101090" font-size="12.5px" font-family="'Noto Sans CJK SC',sans-serif" textLength="50" lengthAdjust="spacing">上证指数</text>
<text x="3" y="604" fill="#1414b0" stroke="#1414b0" stroke-width=".25" font-size="13.5px" textLength="27" lengthAdjust="spacingAndGlyphs">MACD</text>
<text x="13" y="522" fill="#303030" textLength="54" lengthAdjust="spacing">1871.5965</text>
<text x="13" y="546" fill="#303030" textLength="54" lengthAdjust="spacing">465818395</text>
<text x="13" y="562" fill="#303030" textLength="54" lengthAdjust="spacing">310545596</text>
<text x="13" y="578" fill="#303030" textLength="54" lengthAdjust="spacing">155272798</text>
<text x="31" y="616" fill="#303030" textLength="36" lengthAdjust="spacing">126.29</text>
<text x="37" y="634" fill="#303030" textLength="30" lengthAdjust="spacing">85.63</text>
<text x="37" y="652" fill="#303030" textLength="30" lengthAdjust="spacing">44.96</text>
<text x="43" y="671" fill="#303030" textLength="24" lengthAdjust="spacing">4.29</text>
</g>
<g font-family="'Liberation Sans',sans-serif" font-size="12px">
<text x="75" y="604" fill="#000" textLength="51" lengthAdjust="spacingAndGlyphs">DIF=32.93</text>
<text x="146" y="604" fill="#101080" textLength="56" lengthAdjust="spacingAndGlyphs">DEA=45.59</text>
<text x="217" y="604" fill="#c030c0" textLength="67" lengthAdjust="spacingAndGlyphs">MACD=-25.32</text>
</g>
<text x="1085" y="671" fill="#d62424" font-family="'Noto Serif CJK SC',serif" font-size="26px" font-weight="400" letter-spacing="5.5" transform="translate(1160 660) skewX(-6) translate(-1160 -660)">赢家财富网</text>
</svg>
</body></html>
